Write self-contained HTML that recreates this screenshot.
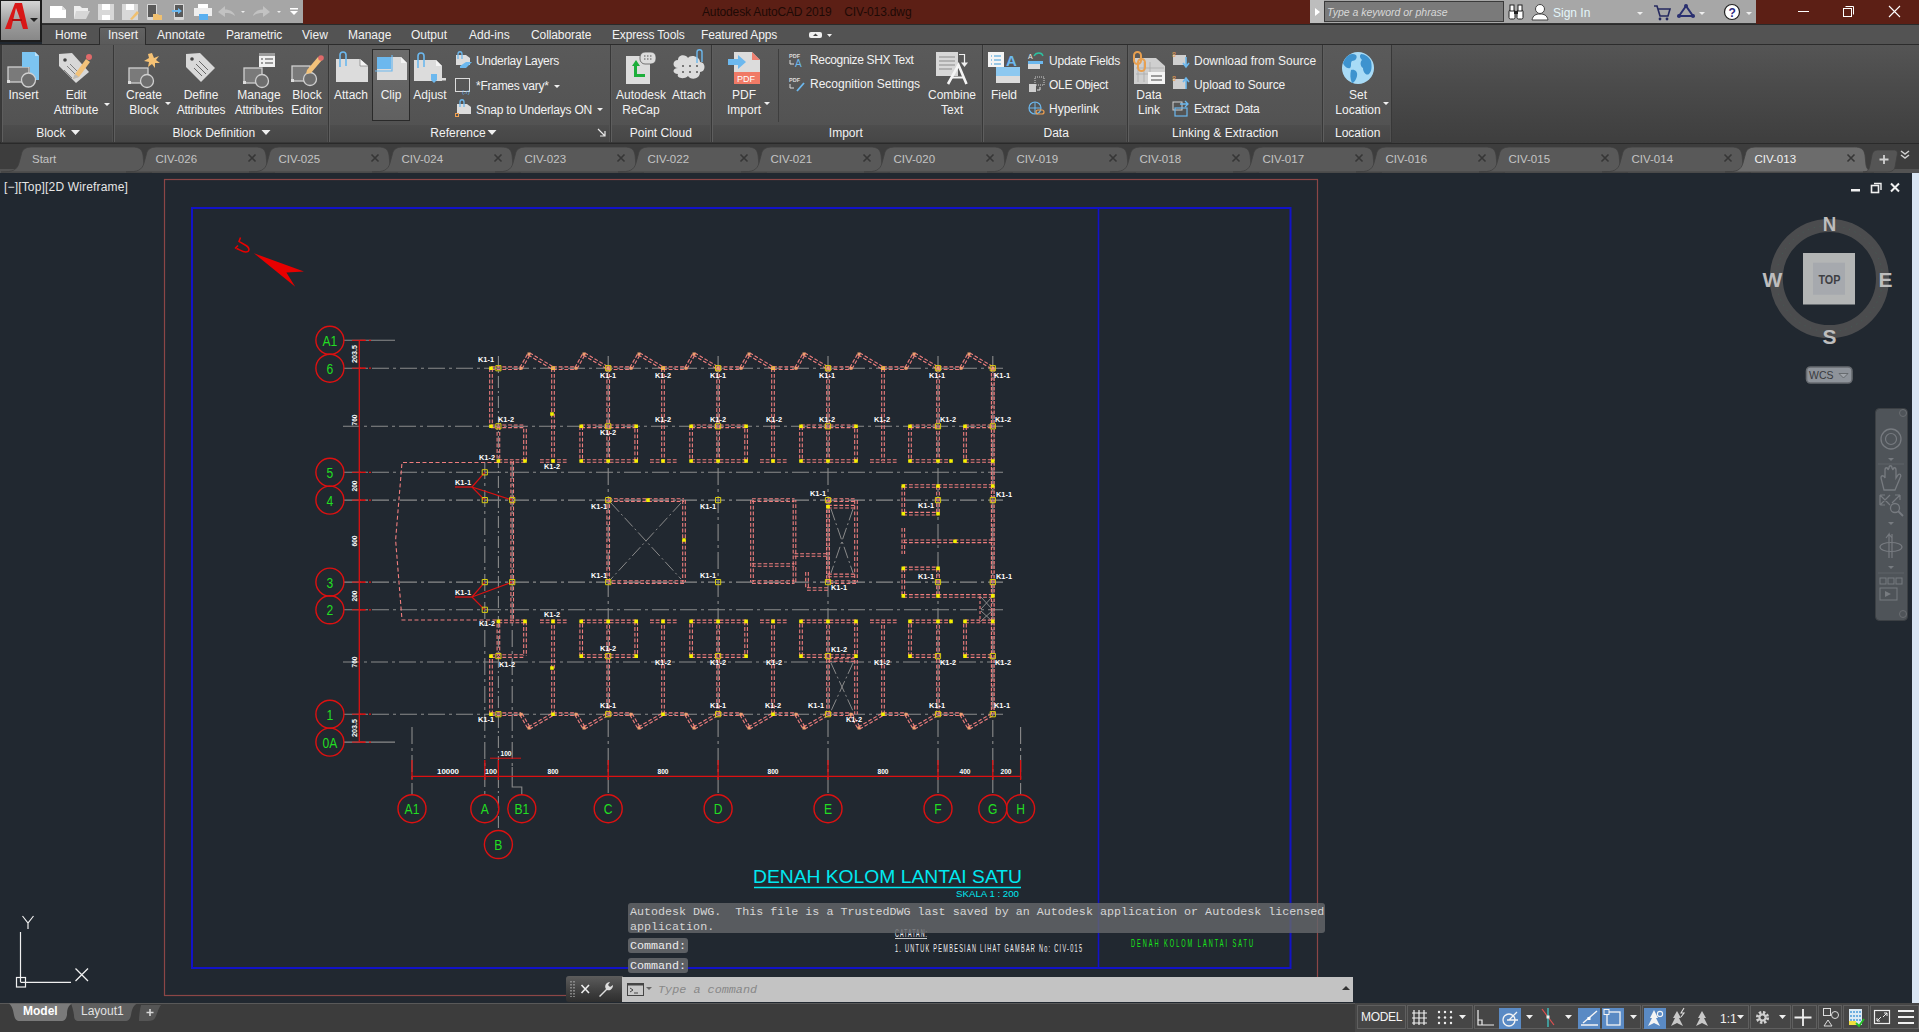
<!DOCTYPE html>
<html><head><meta charset="utf-8">
<style>
*{margin:0;padding:0;box-sizing:border-box}
html,body{width:1919px;height:1032px;overflow:hidden;background:#212830;font-family:"Liberation Sans",sans-serif;font-size:12px;color:#eeeeee}
.a{position:absolute}
svg{position:absolute;overflow:visible}
.t{position:absolute;white-space:nowrap;font-size:12px;color:#f2f2f2;line-height:14px}
.c{text-align:center}
.pt{position:absolute;top:80px;height:17px;left:1px;right:1px;background:linear-gradient(#4d4d4d,#464646);text-align:center;font-size:12px;line-height:16px;color:#f2f2f2;white-space:nowrap}
.pnl{position:absolute;top:45px;height:98px;background:linear-gradient(#5a5a5a,#545454 70%,#505050);border:1px solid #383838;border-top:none;box-shadow:inset 1px 0 0 #5e5e5e}
.ft{position:absolute;top:147px;height:24px;width:121px;background:linear-gradient(#5e5e5e,#545454);border-radius:10px 10px 0 0;color:#c9c9c9;font-size:12px;line-height:23px;padding-left:13px}
.ftx{position:absolute;left:101px;top:0px;color:#a8a8a8;font-size:13px;font-weight:bold}
.sb{position:absolute;top:1005px;height:24px;border:1px solid #5f5f5f;background:#464646}
.mono{font-family:"Liberation Mono",monospace}
</style></head><body>

<div class="a" style="left:0;top:0;width:1919px;height:24px;background:#5c1f15"></div>
<div class="a" style="left:40px;top:0;width:263px;height:24px;background:#a6a6a6;border-bottom:1px solid #333"></div>
<div class="a" style="left:0;top:0;width:42px;height:42px;background:#1c1c1c"></div>
<div class="a" style="left:1px;top:1px;width:39px;height:39px;background:linear-gradient(#d4d4d4,#9a9a9a 60%,#888)"></div>
<svg style="left:0;top:0" width="42" height="42">
 <path d="M5 29 L15 3 L22 3 L28 29 L23 29 L19 16 L16 8 L11 29 Z" fill="#d81818"/>
 <path d="M12 20 L22 20" stroke="#b01010" stroke-width="2"/>
 <path d="M30 18 L38 18 L34 22 Z" fill="#222"/>
</svg>
<svg style="left:40px;top:0" width="263" height="24">
 <path d="M10 6 H22 L26 10 V18 H10 Z" fill="#fff"/><path d="M22 6 V10 H26" fill="#ddd"/>
 <path d="M34 6 H40 L42 8 H48 V11 H40 L34 19 Z" fill="#eee"/><path d="M36 11 H50 L46 19 H34 Z" fill="#d6d6d6"/>
 <path d="M58 4 H74 V20 H58 Z" fill="#d8d8d8"/><rect x="62" y="4" width="8" height="6" fill="#fff"/><rect x="62" y="15" width="8" height="5" fill="#fff"/>
 <path d="M82 4 H98 V20 H82 Z" fill="#d8d8d8"/><rect x="86" y="4" width="8" height="6" fill="#fff"/><path d="M90 19 L97 11 L99 13 L92 20 Z" fill="#f0c070"/>
 <rect x="107" y="4" width="10" height="16" rx="1" fill="#d8d8d8"/><rect x="108" y="5" width="8" height="12" fill="#5a5a5a"/><path d="M113 14 H118 L119 15 H122 V20 H113 Z" fill="#f0c070"/>
 <rect x="134" y="4" width="10" height="16" rx="1" fill="#d8d8d8"/><rect x="135" y="5" width="8" height="12" fill="#5a5a5a"/><path d="M132 10 H138 V8 L142 11 L138 14 V12 H132 Z" fill="#6ab8f0"/>
 <rect x="158" y="4" width="10" height="5" fill="#fff"/><rect x="154" y="8" width="18" height="8" fill="#eee"/><rect x="159" y="14" width="9" height="6" fill="#5ab0f0"/>
 <path d="M178 12 L185 6 V9.5 C190 9.5 194 12 195 16 C192 13.5 189 13 185 13 V17 Z" fill="#c2c2c2"/>
 <path d="M201 11 H205 L203 13 Z" fill="#eee"/>
 <path d="M230 12 L223 6 V9.5 C218 9.5 214 12 213 16 C216 13.5 219 13 223 13 V17 Z" fill="#c2c2c2"/>
 <path d="M237 11 H241 L239 13 Z" fill="#eee"/>
 <rect x="250" y="8" width="8" height="1.5" fill="#fff"/><path d="M250 11 H258 L254 15 Z" fill="#fff"/>
</svg>
<div class="t" style="left:702px;top:5px;font-size:12px;color:#1e0a06;letter-spacing:-0.15px">Autodesk AutoCAD 2019&nbsp;&nbsp;&nbsp;&nbsp;CIV-013.dwg</div>
<div class="a" style="left:1310px;top:0;width:446px;height:24px;background:#a7a7a7;border-bottom:1px solid #333"></div>
<div class="a" style="left:1310px;top:0;width:14px;height:23px;background:#bdbdbd"></div>
<svg style="left:1310px;top:0" width="14" height="24"><path d="M5 8 L10 12 L5 16 Z" fill="#fff"/></svg>
<div class="a" style="left:1324px;top:1px;width:180px;height:21px;background:#7a7a7a;border:1px solid #3a3a3a"></div>
<div class="t" style="left:1327px;top:5px;font-size:10.5px;font-style:italic;color:#d8d8d8">Type a keyword or phrase</div>
<svg style="left:1500px;top:0" width="260" height="24">
 <rect x="9" y="10" width="6" height="9" rx="1.5" fill="#fff" stroke="#222" stroke-width="1"/><rect x="17" y="10" width="6" height="9" rx="1.5" fill="#fff" stroke="#222" stroke-width="1"/><rect x="10" y="5" width="4" height="6" fill="#fff" stroke="#222" stroke-width="1"/><rect x="18" y="5" width="4" height="6" fill="#fff" stroke="#222" stroke-width="1"/><rect x="14" y="11" width="4" height="3" fill="#222"/>
 <circle cx="40" cy="9" r="4.5" fill="#fff" stroke="#444"/><path d="M32 20 C33 15 36 14 40 14 C44 14 47 15 48 20 Z" fill="#fff" stroke="#444"/>
 <text x="53" y="17" font-family="Liberation Sans" font-size="12" fill="#e4f6fa">Sign In</text>
 <path d="M137 12 H143 L140 15 Z" fill="#eee"/>
 <path d="M154 6 L157 6 L160 16 L168 16 L170 9 L158 9" fill="none" stroke="#262a60" stroke-width="1.6"/><circle cx="160" cy="19" r="1.4" fill="#262a60"/><circle cx="167" cy="19" r="1.4" fill="#262a60"/>
 <path d="M186 6 L179 16 L193 16 Z" fill="none" stroke="#2a3070" stroke-width="2"/><circle cx="186" cy="6" r="2" fill="#2a3070"/><circle cx="179" cy="16" r="2" fill="#2a3070"/><circle cx="193" cy="16" r="2" fill="#2a3070"/>
 <path d="M199 12 H205 L202 15 Z" fill="#eee"/>
 <circle cx="232" cy="12" r="7.5" fill="#fff" stroke="#222" stroke-width="1.2"/><text x="228.5" y="16.5" font-family="Liberation Sans" font-weight="bold" font-size="12" fill="#2a2a80">?</text>
 <path d="M246 12 H252 L249 15 Z" fill="#eee"/>
</svg>
<svg style="left:1780px;top:0" width="139" height="24">
 <rect x="18" y="11" width="11" height="1" fill="#fff"/>
 <rect x="63.5" y="8.5" width="8" height="8" fill="none" stroke="#fff"/><path d="M65.5 6.5 H73.5 V14.5" fill="none" stroke="#fff"/>
 <path d="M109 6 L120 17 M120 6 L109 17" stroke="#fff" stroke-width="1.1"/>
</svg>

<div class="a" style="left:42px;top:24px;width:1877px;height:1px;background:#2a2a2a"></div>
<div class="a" style="left:42px;top:25px;width:1877px;height:20px;background:#535353"></div>

<div class="a" style="left:99px;top:27px;width:47px;height:18px;background:linear-gradient(#626262,#5a5a5a);border:1px solid #2b2b2b;border-bottom:none;border-radius:2px 2px 0 0"></div>
<div class="t" style="left:55px;top:28px">Home</div>
<div class="t" style="left:108px;top:28px">Insert</div>
<div class="t" style="left:157px;top:28px">Annotate</div>
<div class="t" style="left:226px;top:28px;letter-spacing:-0.2px">Parametric</div>
<div class="t" style="left:302px;top:28px">View</div>
<div class="t" style="left:348px;top:28px">Manage</div>
<div class="t" style="left:411px;top:28px">Output</div>
<div class="t" style="left:469px;top:28px">Add-ins</div>
<div class="t" style="left:531px;top:28px;letter-spacing:-0.1px">Collaborate</div>
<div class="t" style="left:612px;top:28px;letter-spacing:-0.15px">Express Tools</div>
<div class="t" style="left:701px;top:28px;letter-spacing:-0.15px">Featured Apps</div>
<svg style="left:805px;top:27px" width="30" height="16"><rect x="4" y="5" width="13" height="6" rx="2" fill="#f0f0f0"/><path d="M8 9 L10.5 6.5 L13 9 Z" fill="#444"/><path d="M22 7 H27 L24.5 10 Z" fill="#f0f0f0"/></svg>

<div class="a" style="left:0;top:44px;width:1919px;height:99px;background:linear-gradient(#555 0%,#4a4a4a 45%,#3e3e3e 100%)"></div>
<div class="a" style="left:0;top:44px;width:2px;height:99px;background:#3a3a3a"></div>
<div class="a" style="left:0;top:44px;width:100px;height:1px;background:#2c2c2c"></div>
<div class="a" style="left:145px;top:44px;width:1774px;height:1px;background:#2c2c2c"></div>
<div class="a" style="left:0;top:142px;width:1392px;height:1px;background:#2c2c2c"></div>

<div class="pnl" style="left:1px;width:113px"><div class="pt"></div></div>
<div class="pnl" style="left:113px;width:216px"><div class="pt"></div></div>
<div class="pnl" style="left:328px;width:283px"><div class="pt"></div></div>
<div class="pnl" style="left:610px;width:102px"><div class="pt"></div></div>
<div class="pnl" style="left:711px;width:272px"><div class="pt"></div></div>
<div class="pnl" style="left:982px;width:146px"><div class="pt"></div></div>
<div class="pnl" style="left:1127px;width:196px"><div class="pt"></div></div>
<div class="pnl" style="left:1322px;width:70px"><div class="pt"></div></div>
<div class="a" style="left:372px;top:49px;width:38px;height:72px;background:linear-gradient(#6c6c6c,#606060);border:1px solid #2a2a2a"></div>
<div class="a" style="left:778px;top:49px;width:1px;height:73px;background:#3e3e3e"></div>
<svg style="left:0;top:44px" width="1400" height="100">
<g id="insert">
 <rect x="8" y="23" width="21" height="15" fill="#7a7a7a" stroke="#d0d0d0" stroke-width="1.3"/>
 <rect x="7" y="36" width="3" height="3" fill="#ddd"/>
 <path d="M22 8 H35 L39 12 V36 H30 V23 H22 Z" fill="#7cc4f0"/><path d="M35 8 V12 H39" fill="#bfe2f8"/>
 <circle cx="28.5" cy="36" r="7" fill="#6e6e6e" stroke="#d0d0d0" stroke-width="1.3"/>
</g>
<g id="editattr">
 <path d="M59 10 L72 9 L89 28 L76 39 L59 22 Z" fill="#d8d8d8"/><circle cx="65" cy="16" r="1.8" fill="#444"/>
 <path d="M67 22 L77 32 M70 20 L80 30 M64 26 L72 34" stroke="#777" stroke-width="0.9"/>
 <path d="M75 30 L86 15 L90 18 L79 33 L73 35 Z" fill="#f2c27a"/><path d="M73 35 L75 30 L79 33 Z" fill="#bbb"/><circle cx="89" cy="13" r="3" fill="#e06a6a"/>
</g>
<g id="create">
 <rect x="129" y="24" width="19" height="15" fill="#7a7a7a" stroke="#d0d0d0" stroke-width="1.3"/>
 <rect x="128" y="37" width="3" height="3" fill="#ddd"/>
 <circle cx="147" cy="37" r="6.5" fill="#6e6e6e" stroke="#d0d0d0" stroke-width="1.3"/>
 <path d="M152 9 L154 14 L159 12 L156 16 L160 19 L155 19 L155 24 L152 20 L148 23 L149 18 L144 17 L149 14 L148 10 Z" fill="#f6c275"/>
</g>
<g id="define">
 <path d="M186 10 L200 9 L215 24 L201 38 L186 23 Z" fill="#d8d8d8"/><circle cx="192" cy="15" r="1.8" fill="#444"/>
 <path d="M196 20 L206 30 M194 24 L202 32 M199 17 L208 26" stroke="#666" stroke-width="1"/>
</g>
<g id="manage">
 <rect x="244" y="24" width="18" height="15" fill="#7a7a7a" stroke="#d0d0d0" stroke-width="1.3"/>
 <rect x="243" y="37" width="3" height="3" fill="#ddd"/>
 <circle cx="262" cy="37" r="6.5" fill="#6e6e6e" stroke="#d0d0d0" stroke-width="1.3"/>
 <rect x="259" y="9" width="16" height="14" fill="#f0f0f0"/><rect x="259" y="9" width="16" height="3" fill="#9a9a9a"/>
 <path d="M261 15 H263 M265 15 H273 M261 19 H263 M265 19 H273" stroke="#444" stroke-width="1.2"/>
</g>
<g id="bedit">
 <rect x="292" y="22" width="18" height="15" fill="#7a7a7a" stroke="#d0d0d0" stroke-width="1.3"/>
 <rect x="291" y="35" width="3" height="3" fill="#ddd"/>
 <circle cx="310" cy="35" r="6.5" fill="#6e6e6e" stroke="#d0d0d0" stroke-width="1.3"/>
 <path d="M307 26 L318 13 L322 16 L311 29 L306 30 Z" fill="#f2c27a"/><circle cx="321" cy="14" r="2.8" fill="#e06a6a"/>
</g>
<g id="attach">
 <path d="M336 15 H360 L368 22 V38 H336 Z" fill="#dcdcdc"/><path d="M360 15 V22 H368" fill="#f4f4f4" stroke="#555" stroke-width="0.5"/>
 <path d="M340 23 V11 C340 7 346 7 346 11 V22" fill="none" stroke="#6cb8ee" stroke-width="1.6"/>
</g>
<g id="clip">
 <path d="M377 13 H401 L407 19 V36 H377 Z" fill="#dcdcdc"/><path d="M401 13 V19 H407" fill="#f4f4f4"/>
 <rect x="377" y="13" width="14" height="12" fill="#6cb8ee"/><path d="M375 27 H392 V11" fill="none" stroke="#6cb8ee" stroke-width="1.2"/>
</g>
<g id="adjust">
 <path d="M414 16 H436 L442 22 V37 H414 Z" fill="#dcdcdc"/><path d="M436 16 V22 H442" fill="#f4f4f4"/>
 <path d="M418 24 V12 C418 8 424 8 424 12 V23" fill="none" stroke="#6cb8ee" stroke-width="1.6"/>
 <rect x="429" y="34" width="17" height="2.5" fill="#dcdcdc"/><path d="M431 30 H437 V36 L434 39 L431 36 Z" fill="#6cb8ee"/>
</g>
<g id="smallref">
 <path d="M456 11 H466 L470 14 V21 H456 Z" fill="#dcdcdc"/><path d="M458 15 V10 C458 7 462 7 462 10 V15" fill="none" stroke="#6cb8ee" stroke-width="1.3"/><path d="M460 22 L466 18 H472 L466 24 H460 Z" fill="#6cb8ee"/>
 <rect x="455.5" y="34.5" width="14" height="13" fill="none" stroke="#dcdcdc"/><text x="462" y="50" font-size="6" fill="#6cb8ee" font-family="Liberation Sans">(.r)</text>
 <path d="M457 60 H467 L471 63 V70 H457 Z" fill="#dcdcdc"/><path d="M460 63 V58 C460 55 464 55 464 58 V63" fill="none" stroke="#6cb8ee" stroke-width="1.3"/><rect x="455.5" y="69.5" width="3" height="3" fill="none" stroke="#f0a050"/>
</g>
<g id="recap">
 <rect x="626" y="12" width="24" height="28" fill="#dcdcdc"/><path d="M636 16 L640 22 H637 V30 H645 V33 H634 V22 H632 Z" fill="#1cae3a"/>
 <rect x="640" y="8" width="16" height="12" rx="5" fill="#dcdcdc" stroke="#555" stroke-width="0.8"/><path d="M644 12 H652 M644 15 H652" stroke="#555" stroke-width="1.2" stroke-dasharray="1.5 1.5"/>
</g>
<g id="pcattach">
 <path d="M678 24 C672 24 672 16 678 16 C678 10 686 10 688 14 C690 10 700 12 700 18 C706 18 706 28 700 28 C700 36 690 36 688 32 C684 36 676 34 678 30 C672 30 672 24 678 24 Z" fill="#dcdcdc"/>
 <path d="M682 22 H684 M689 22 H691 M696 22 H698 M682 28 H684 M689 28 H691 M696 28 H698" stroke="#555" stroke-width="1.6"/>
 <path d="M697 19 V8 C697 5 702 5 702 8 V18" fill="none" stroke="#6cb8ee" stroke-width="1.4"/>
</g>
<g id="pdf">
 <path d="M734 8 H752 L760 16 V40 H734 Z" fill="#dcdcdc"/><path d="M752 8 L760 16 H752 Z" fill="#f08070"/>
 <rect x="734" y="28" width="26" height="12" fill="#f07a66"/><text x="737" y="38" font-size="9" fill="#fff" font-family="Liberation Sans">PDF</text>
 <path d="M728 15 H738 V11 L746 18 L738 25 V21 H728 Z" fill="#6cb8ee"/>
</g>
<g id="shx">
 <text x="789" y="14" font-size="5.5" fill="#ddd" font-family="Liberation Sans" font-weight="bold">PDF</text><path d="M790 16 V20 H794" fill="none" stroke="#ddd" stroke-width="1"/><text x="795" y="23" font-size="10" fill="#6cb8ee" font-family="Liberation Sans">A</text>
 <text x="789" y="38" font-size="5.5" fill="#ddd" font-family="Liberation Sans" font-weight="bold">PDF</text><path d="M790 40 V44 H794" fill="none" stroke="#ddd" stroke-width="1"/><path d="M797 47 L804 39" stroke="#6cb8ee" stroke-width="1.8"/>
</g>
<g id="combine">
 <rect x="936" y="8" width="22" height="24" fill="#d8d8d8"/><path d="M939 13 H955 M939 17 H955 M939 21 H955 M939 25 H952" stroke="#8a8a8a" stroke-width="1.1"/>
 <path d="M959 10.5 H964.5 V20" fill="none" stroke="#f0f0f0" stroke-width="1.2"/><path d="M961 18.5 H968 L964.5 23 Z" fill="#f0f0f0"/>
 <path d="M948 40 L958.5 21 L966.5 40" fill="none" stroke="#f4f4f4" stroke-width="2.6"/><path d="M951.5 33.5 H963.5" stroke="#f4f4f4" stroke-width="2"/>
</g>
<g id="field">
 <rect x="988" y="8" width="16" height="15" fill="#f4f4f4"/><path d="M991 12 H992 M994 12 H1001 M991 16 H992 M994 16 H1001 M991 20 H992 M994 20 H1001" stroke="#3a9ad8" stroke-width="1.2"/>
 <text x="1006" y="22" font-size="15" fill="#6cb8ee" font-family="Liberation Sans" font-weight="bold">A</text>
 <rect x="996" y="23" width="24" height="9" fill="#8cc8f0"/><rect x="996" y="32" width="24" height="7" fill="#dcdcdc"/>
</g>
<g id="datasmall">
 <text x="1028" y="15" font-size="7" fill="#eee" font-family="Liberation Sans">A</text><path d="M1034 12 C1036 8 1042 8 1043 12" fill="none" stroke="#2cc2a0" stroke-width="1.3"/><rect x="1028" y="17" width="15" height="3" fill="#6cb8ee"/><rect x="1028" y="20" width="12" height="5" fill="#dcdcdc"/>
 <rect x="1029" y="40" width="7" height="8" fill="#cfcfcf"/><rect x="1035" y="33" width="9" height="8" fill="none" stroke="#cfcfcf" stroke-dasharray="1 1"/><path d="M1040 43 V46 H1037" fill="none" stroke="#ddd"/>
 <circle cx="1035" cy="64" r="6" fill="none" stroke="#6cb8ee" stroke-width="1.2"/><path d="M1029 64 H1041 M1035 58 V70" stroke="#6cb8ee"/><rect x="1036" y="66" width="8" height="4" rx="2" fill="none" stroke="#f0a050" stroke-width="1.2"/>
</g>
<g id="datalink">
 <path d="M1134 14 H1156 L1165 22 V40 H1134 Z" fill="#cfcfcf"/><path d="M1138 18 V38 M1144 18 V38 M1150 18 V38 M1136 24 H1164 M1136 30 H1164" stroke="#aaa" stroke-width="0.8"/>
 <rect x="1148" y="28" width="17" height="12" fill="#f4f4f4"/><path d="M1151 32 H1162 M1151 36 H1162" stroke="#444"/>
 <rect x="1134" y="8" width="7" height="12" rx="3.5" fill="none" stroke="#e8a050" stroke-width="2"/><rect x="1138" y="15" width="7" height="12" rx="3.5" fill="none" stroke="#e8a050" stroke-width="2"/>
</g>
<g id="linksmall">
 <rect x="1173" y="11" width="13" height="10" fill="#cfcfcf"/><text x="1172" y="13" font-size="7" fill="#e8a050" font-family="Liberation Sans">8</text><path d="M1186 13 V22 M1183 19 L1186 23 L1189 19" fill="none" stroke="#6cb8ee" stroke-width="1.6"/>
 <rect x="1173" y="35" width="13" height="10" fill="#cfcfcf"/><text x="1172" y="37" font-size="7" fill="#e8a050" font-family="Liberation Sans">8</text><path d="M1186 45 V35 M1183 38 L1186 34 L1189 38" fill="none" stroke="#6cb8ee" stroke-width="1.6"/>
 <rect x="1173" y="58" width="9" height="8" fill="none" stroke="#cfcfcf"/><rect x="1175" y="64" width="12" height="8" fill="none" stroke="#6cb8ee" stroke-width="1.2"/><path d="M1180 60 H1188 M1185 57 L1188 60 L1185 63" fill="none" stroke="#6cb8ee" stroke-width="1.3"/>
</g>
<g id="globe">
 <circle cx="1358" cy="24" r="16" fill="#a8dbf6"/>
 <path d="M1345 15 C1348 10 1353 9 1356 11 C1358 14 1355 17 1352 17 C1350 19 1352 22 1350 24 C1347 25 1344 22 1343 19 Z M1351 26 C1355 25 1358 28 1357 32 C1356 36 1354 39 1352 39 C1350 35 1350 30 1351 26 Z M1361 10 C1365 10 1369 13 1371 17 C1372 22 1372 27 1369 30 C1366 32 1363 28 1363 24 C1360 22 1360 18 1362 16 C1360 14 1359 12 1361 10 Z" fill="#3d93cf"/>
</g>
<path d="M104 59 H110 L107 62 Z M165 58 H171 L168 61 Z M764 58 H770 L767 61 Z M1383 58 H1389 L1386 61 Z" fill="#f0f0f0"/>
<path d="M554 41 H560 L557 44 Z M597 64 H603 L600 67 Z" fill="#f0f0f0"/>
</svg>
<div class="t c" style="left:3px;top:88px;width:41px">Insert</div>
<div class="t c" style="left:46px;top:88px;width:60px">Edit</div>
<div class="t c" style="left:46px;top:103px;width:60px">Attribute</div>
<div class="t c" style="left:120px;top:88px;width:48px">Create</div>
<div class="t c" style="left:120px;top:103px;width:48px">Block</div>
<div class="t c" style="left:172px;top:88px;width:58px">Define</div>
<div class="t c" style="left:172px;top:103px;width:58px;letter-spacing:-0.2px">Attributes</div>
<div class="t c" style="left:230px;top:88px;width:58px">Manage</div>
<div class="t c" style="left:230px;top:103px;width:58px;letter-spacing:-0.2px">Attributes</div>
<div class="t c" style="left:286px;top:88px;width:42px">Block</div>
<div class="t c" style="left:286px;top:103px;width:42px">Editor</div>
<div class="t c" style="left:330px;top:88px;width:42px">Attach</div>
<div class="t c" style="left:372px;top:88px;width:38px">Clip</div>
<div class="t c" style="left:410px;top:88px;width:40px">Adjust</div>
<div class="t" style="left:476px;top:53.5px;letter-spacing:-0.3px">Underlay Layers</div>
<div class="t" style="left:476px;top:78.5px;letter-spacing:-0.26px">*Frames vary*</div>
<div class="t" style="left:476px;top:103px;letter-spacing:-0.2px">Snap to Underlays ON</div>
<div class="t c" style="left:614px;top:88px;width:54px">Autodesk</div>
<div class="t c" style="left:614px;top:103px;width:54px">ReCap</div>
<div class="t c" style="left:668px;top:88px;width:42px">Attach</div>
<div class="t c" style="left:720px;top:88px;width:48px">PDF</div>
<div class="t c" style="left:720px;top:103px;width:48px">Import</div>
<div class="t" style="left:810px;top:53px;letter-spacing:-0.35px">Recognize SHX Text</div>
<div class="t" style="left:810px;top:77px">Recognition Settings</div>
<div class="t c" style="left:922px;top:88px;width:60px">Combine</div>
<div class="t c" style="left:922px;top:103px;width:60px">Text</div>
<div class="t c" style="left:984px;top:88px;width:40px">Field</div>
<div class="t" style="left:1049px;top:54px;letter-spacing:-0.23px">Update Fields</div>
<div class="t" style="left:1049px;top:78px;letter-spacing:-0.3px">OLE Object</div>
<div class="t" style="left:1049px;top:102px">Hyperlink</div>
<div class="t c" style="left:1128px;top:88px;width:42px">Data</div>
<div class="t c" style="left:1128px;top:103px;width:42px">Link</div>
<div class="t" style="left:1194px;top:54px">Download from Source</div>
<div class="t" style="left:1194px;top:78px;letter-spacing:-0.1px">Upload to Source</div>
<div class="t" style="left:1194px;top:102px;letter-spacing:-0.3px">Extract&nbsp; Data</div>
<div class="t c" style="left:1326px;top:88px;width:64px">Set</div>
<div class="t c" style="left:1326px;top:103px;width:64px">Location</div>
<div class="t" style="left:36.2px;top:125.5px">Block</div>
<div class="t" style="left:172.5px;top:125.5px">Block Definition</div>
<div class="t" style="left:430.3px;top:125.5px">Reference</div>
<div class="t" style="left:629.8px;top:125.5px">Point Cloud</div>
<div class="t" style="left:828.8px;top:125.5px">Import</div>
<div class="t" style="left:1043.5px;top:125.5px">Data</div>
<div class="t" style="left:1172px;top:125.5px">Linking &amp; Extraction</div>
<div class="t" style="left:1335px;top:125.5px">Location</div>
<svg style="left:0;top:120px" width="620" height="20"><path d="M71 10 H80 L75.5 15 Z M261.5 10 H270.5 L266 15 Z M487.5 10 H496.5 L492 15 Z" fill="#f0f0f0"/><path d="M598 9 L605 16 M605 11 V16 H600" fill="none" stroke="#e8e8e8" stroke-width="1.2"/></svg>

<div class="a" style="left:0;top:143px;width:1919px;height:30px;background:#3d3d3d"></div>
<div class="a" style="left:0;top:143px;width:1919px;height:1px;background:#2a2a2a"></div>
<svg style="left:0;top:143px" width="1919" height="30">
<rect x="0" y="26" width="1919" height="4" fill="#535353"/>
<path d="M1,29 C13,29 17,27 19,20 L22,9 C24,5 27,4 33,4 L132,4 C139,4 142,6 143,12 L144,22 C145,27 148,29 152,29 Z" fill="#595959" stroke="#404040" stroke-width="0.8"/>
<path d="M126,29 C138,29 142,27 144,20 L147,9 C149,5 152,4 158,4 L255,4 C262,4 265,6 266,12 L267,22 C268,27 271,29 275,29 Z" fill="#595959" stroke="#404040" stroke-width="0.8"/>
<path d="M248.5,11.5 L255.5,18.5 M255.5,11.5 L248.5,18.5" stroke="#363636" stroke-width="1.6"/>
<path d="M249,29 C261,29 265,27 267,20 L270,9 C272,5 275,4 281,4 L378,4 C385,4 388,6 389,12 L390,22 C391,27 394,29 398,29 Z" fill="#595959" stroke="#404040" stroke-width="0.8"/>
<path d="M371.5,11.5 L378.5,18.5 M378.5,11.5 L371.5,18.5" stroke="#363636" stroke-width="1.6"/>
<path d="M372,29 C384,29 388,27 390,20 L393,9 C395,5 398,4 404,4 L501,4 C508,4 511,6 512,12 L513,22 C514,27 517,29 521,29 Z" fill="#595959" stroke="#404040" stroke-width="0.8"/>
<path d="M494.5,11.5 L501.5,18.5 M501.5,11.5 L494.5,18.5" stroke="#363636" stroke-width="1.6"/>
<path d="M495,29 C507,29 511,27 513,20 L516,9 C518,5 521,4 527,4 L624,4 C631,4 634,6 635,12 L636,22 C637,27 640,29 644,29 Z" fill="#595959" stroke="#404040" stroke-width="0.8"/>
<path d="M617.5,11.5 L624.5,18.5 M624.5,11.5 L617.5,18.5" stroke="#363636" stroke-width="1.6"/>
<path d="M618,29 C630,29 634,27 636,20 L639,9 C641,5 644,4 650,4 L747,4 C754,4 757,6 758,12 L759,22 C760,27 763,29 767,29 Z" fill="#595959" stroke="#404040" stroke-width="0.8"/>
<path d="M740.5,11.5 L747.5,18.5 M747.5,11.5 L740.5,18.5" stroke="#363636" stroke-width="1.6"/>
<path d="M741,29 C753,29 757,27 759,20 L762,9 C764,5 767,4 773,4 L870,4 C877,4 880,6 881,12 L882,22 C883,27 886,29 890,29 Z" fill="#595959" stroke="#404040" stroke-width="0.8"/>
<path d="M863.5,11.5 L870.5,18.5 M870.5,11.5 L863.5,18.5" stroke="#363636" stroke-width="1.6"/>
<path d="M864,29 C876,29 880,27 882,20 L885,9 C887,5 890,4 896,4 L993,4 C1000,4 1003,6 1004,12 L1005,22 C1006,27 1009,29 1013,29 Z" fill="#595959" stroke="#404040" stroke-width="0.8"/>
<path d="M986.5,11.5 L993.5,18.5 M993.5,11.5 L986.5,18.5" stroke="#363636" stroke-width="1.6"/>
<path d="M987,29 C999,29 1003,27 1005,20 L1008,9 C1010,5 1013,4 1019,4 L1116,4 C1123,4 1126,6 1127,12 L1128,22 C1129,27 1132,29 1136,29 Z" fill="#595959" stroke="#404040" stroke-width="0.8"/>
<path d="M1109.5,11.5 L1116.5,18.5 M1116.5,11.5 L1109.5,18.5" stroke="#363636" stroke-width="1.6"/>
<path d="M1110,29 C1122,29 1126,27 1128,20 L1131,9 C1133,5 1136,4 1142,4 L1239,4 C1246,4 1249,6 1250,12 L1251,22 C1252,27 1255,29 1259,29 Z" fill="#595959" stroke="#404040" stroke-width="0.8"/>
<path d="M1232.5,11.5 L1239.5,18.5 M1239.5,11.5 L1232.5,18.5" stroke="#363636" stroke-width="1.6"/>
<path d="M1233,29 C1245,29 1249,27 1251,20 L1254,9 C1256,5 1259,4 1265,4 L1362,4 C1369,4 1372,6 1373,12 L1374,22 C1375,27 1378,29 1382,29 Z" fill="#595959" stroke="#404040" stroke-width="0.8"/>
<path d="M1355.5,11.5 L1362.5,18.5 M1362.5,11.5 L1355.5,18.5" stroke="#363636" stroke-width="1.6"/>
<path d="M1356,29 C1368,29 1372,27 1374,20 L1377,9 C1379,5 1382,4 1388,4 L1485,4 C1492,4 1495,6 1496,12 L1497,22 C1498,27 1501,29 1505,29 Z" fill="#595959" stroke="#404040" stroke-width="0.8"/>
<path d="M1478.5,11.5 L1485.5,18.5 M1485.5,11.5 L1478.5,18.5" stroke="#363636" stroke-width="1.6"/>
<path d="M1479,29 C1491,29 1495,27 1497,20 L1500,9 C1502,5 1505,4 1511,4 L1608,4 C1615,4 1618,6 1619,12 L1620,22 C1621,27 1624,29 1628,29 Z" fill="#595959" stroke="#404040" stroke-width="0.8"/>
<path d="M1601.5,11.5 L1608.5,18.5 M1608.5,11.5 L1601.5,18.5" stroke="#363636" stroke-width="1.6"/>
<path d="M1602,29 C1614,29 1618,27 1620,20 L1623,9 C1625,5 1628,4 1634,4 L1731,4 C1738,4 1741,6 1742,12 L1743,22 C1744,27 1747,29 1751,29 Z" fill="#595959" stroke="#404040" stroke-width="0.8"/>
<path d="M1724.5,11.5 L1731.5,18.5 M1731.5,11.5 L1724.5,18.5" stroke="#363636" stroke-width="1.6"/>
<path d="M1725,29 C1737,29 1741,27 1743,20 L1746,9 C1748,5 1751,4 1757,4 L1854,4 C1861,4 1864,6 1865,12 L1866,22 C1867,27 1870,29 1874,29 Z" fill="#6c6c6c" stroke="#404040" stroke-width="0.8"/>
<path d="M1847.5,11.5 L1854.5,18.5 M1854.5,11.5 L1847.5,18.5" stroke="#363636" stroke-width="1.6"/>
<path d="M1863,29 C1868,29 1869,27 1870,22 L1872,12 C1873,8 1875,7 1879,7 L1894,7 C1897,7 1898,9 1897,13 L1895,24 C1894,28 1891,29 1886,29 Z" fill="#555" stroke="#404040" stroke-width="0.8"/>
<path d="M1884,12 V21 M1879.5,16.5 H1888.5" stroke="#d0d0d0" stroke-width="1.8"/>
<path d="M1901,8 L1905,11 L1909,8 M1901,12 L1905,15 L1909,12" fill="none" stroke="#d0d0d0" stroke-width="1.5"/>
</svg>
<div class="t" style="left:32px;top:151.5px;font-size:11.5px;color:#c4c4c4">Start</div>
<div class="t" style="left:155.5px;top:151.5px;font-size:11.5px;color:#c4c4c4">CIV-026</div>
<div class="t" style="left:278.5px;top:151.5px;font-size:11.5px;color:#c4c4c4">CIV-025</div>
<div class="t" style="left:401.5px;top:151.5px;font-size:11.5px;color:#c4c4c4">CIV-024</div>
<div class="t" style="left:524.5px;top:151.5px;font-size:11.5px;color:#c4c4c4">CIV-023</div>
<div class="t" style="left:647.5px;top:151.5px;font-size:11.5px;color:#c4c4c4">CIV-022</div>
<div class="t" style="left:770.5px;top:151.5px;font-size:11.5px;color:#c4c4c4">CIV-021</div>
<div class="t" style="left:893.5px;top:151.5px;font-size:11.5px;color:#c4c4c4">CIV-020</div>
<div class="t" style="left:1016.5px;top:151.5px;font-size:11.5px;color:#c4c4c4">CIV-019</div>
<div class="t" style="left:1139.5px;top:151.5px;font-size:11.5px;color:#c4c4c4">CIV-018</div>
<div class="t" style="left:1262.5px;top:151.5px;font-size:11.5px;color:#c4c4c4">CIV-017</div>
<div class="t" style="left:1385.5px;top:151.5px;font-size:11.5px;color:#c4c4c4">CIV-016</div>
<div class="t" style="left:1508.5px;top:151.5px;font-size:11.5px;color:#c4c4c4">CIV-015</div>
<div class="t" style="left:1631.5px;top:151.5px;font-size:11.5px;color:#c4c4c4">CIV-014</div>
<div class="t" style="left:1754.5px;top:151.5px;font-size:11.5px;color:#f2f2f2">CIV-013</div>
<div class="a" style="left:0;top:173px;width:1912px;height:830px;background:#212830"></div>
<div class="a" style="left:1912px;top:173px;width:7px;height:830px;background:#d9e5f3"></div>

<svg style="left:0;top:0" width="1919" height="1032" viewBox="0 0 1919 1032"><rect x="164.5" y="179.5" width="1153" height="816" fill="none" stroke="#8c4646" stroke-width="1.2"/>
<rect x="192" y="208" width="1098.5" height="760" fill="none" stroke="#1212c8" stroke-width="2"/>
<line x1="1098.5" y1="208" x2="1098.5" y2="968" stroke="#1212c8" stroke-width="1.6"/>
<path d="M254,253.3 L304,271.6 L286.4,272.5 L295.2,286.7 Z" fill="#e80000"/>
<path d="M240.5,237.5 L239,241.5 L246,245.5 C250,248 250,252 245.5,252 C243,252 240,250 236.5,248.5 M238,245.5 L235,248.5" fill="none" stroke="#e80000" stroke-width="1.5"/>
<line x1="344" y1="340.3" x2="395" y2="340.3" stroke="#8a8a8a" stroke-width="1.1" stroke-dasharray="50 0" stroke-dashoffset="0"/>
<line x1="344" y1="368.2" x2="1003" y2="368.2" stroke="#8a8a8a" stroke-width="1.1" stroke-dasharray="17 4 3 4" stroke-dashoffset="0"/>
<line x1="344" y1="472.3" x2="1003" y2="472.3" stroke="#8a8a8a" stroke-width="1.1" stroke-dasharray="17 4 3 4" stroke-dashoffset="0"/>
<line x1="344" y1="500.1" x2="1003" y2="500.1" stroke="#8a8a8a" stroke-width="1.1" stroke-dasharray="17 4 3 4" stroke-dashoffset="0"/>
<line x1="344" y1="582.1" x2="1003" y2="582.1" stroke="#8a8a8a" stroke-width="1.1" stroke-dasharray="17 4 3 4" stroke-dashoffset="0"/>
<line x1="344" y1="609.8" x2="1003" y2="609.8" stroke="#8a8a8a" stroke-width="1.1" stroke-dasharray="17 4 3 4" stroke-dashoffset="0"/>
<line x1="344" y1="714.2" x2="1003" y2="714.2" stroke="#8a8a8a" stroke-width="1.1" stroke-dasharray="17 4 3 4" stroke-dashoffset="0"/>
<line x1="344" y1="742.1" x2="395" y2="742.1" stroke="#8a8a8a" stroke-width="1.1" stroke-dasharray="50 0" stroke-dashoffset="0"/>
<line x1="343" y1="426.3" x2="1003" y2="426.3" stroke="#8a8a8a" stroke-width="1.1" stroke-dasharray="17 4 3 4" stroke-dashoffset="0"/>
<line x1="343" y1="662" x2="1003" y2="662" stroke="#8a8a8a" stroke-width="1.1" stroke-dasharray="17 4 3 4" stroke-dashoffset="0"/>
<line x1="412" y1="727" x2="412" y2="795" stroke="#8a8a8a" stroke-width="1.1" stroke-dasharray="17 4 3 4" stroke-dashoffset="0"/>
<line x1="484.8" y1="462" x2="484.8" y2="795" stroke="#8a8a8a" stroke-width="1.1" stroke-dasharray="17 4 3 4" stroke-dashoffset="0"/>
<line x1="498.4" y1="356" x2="498.4" y2="830" stroke="#8a8a8a" stroke-width="1.1" stroke-dasharray="12 3 2 3" stroke-dashoffset="0"/>
<line x1="608.2" y1="356" x2="608.2" y2="795" stroke="#8a8a8a" stroke-width="1.1" stroke-dasharray="17 4 3 4" stroke-dashoffset="0"/>
<line x1="718.1" y1="356" x2="718.1" y2="795" stroke="#8a8a8a" stroke-width="1.1" stroke-dasharray="17 4 3 4" stroke-dashoffset="0"/>
<line x1="828" y1="356" x2="828" y2="795" stroke="#8a8a8a" stroke-width="1.1" stroke-dasharray="17 4 3 4" stroke-dashoffset="0"/>
<line x1="938" y1="356" x2="938" y2="795" stroke="#8a8a8a" stroke-width="1.1" stroke-dasharray="17 4 3 4" stroke-dashoffset="0"/>
<line x1="992.8" y1="356" x2="992.8" y2="795" stroke="#8a8a8a" stroke-width="1.1" stroke-dasharray="17 4 3 4" stroke-dashoffset="0"/>
<line x1="1020.6" y1="727" x2="1020.6" y2="795" stroke="#8a8a8a" stroke-width="1.1" stroke-dasharray="17 4 3 4" stroke-dashoffset="0"/>
<path d="M512.2,462 L512.2,767" fill="none" stroke="#8a8a8a" stroke-width="1.1" stroke-dasharray="17 4 3 4"/>
<path d="M512.2,767 L512.2,787 L521.8,787 L521.8,795" fill="none" stroke="#8a8a8a" stroke-width="1.1"/>
<circle cx="329.9" cy="340.3" r="14" fill="none" stroke="#dd1111" stroke-width="1.4"/>
<text x="329.9" y="345.8" text-anchor="middle" font-family="Liberation Sans" font-size="15.5" fill="#22dd22" transform="translate(329.9,0) scale(0.78,1) translate(-329.9,0)">A1</text>
<circle cx="329.9" cy="368.2" r="14" fill="none" stroke="#dd1111" stroke-width="1.4"/>
<text x="329.9" y="373.7" text-anchor="middle" font-family="Liberation Sans" font-size="15.5" fill="#22dd22" transform="translate(329.9,0) scale(0.78,1) translate(-329.9,0)">6</text>
<circle cx="329.9" cy="472.3" r="14" fill="none" stroke="#dd1111" stroke-width="1.4"/>
<text x="329.9" y="477.8" text-anchor="middle" font-family="Liberation Sans" font-size="15.5" fill="#22dd22" transform="translate(329.9,0) scale(0.78,1) translate(-329.9,0)">5</text>
<circle cx="329.9" cy="500.1" r="14" fill="none" stroke="#dd1111" stroke-width="1.4"/>
<text x="329.9" y="505.6" text-anchor="middle" font-family="Liberation Sans" font-size="15.5" fill="#22dd22" transform="translate(329.9,0) scale(0.78,1) translate(-329.9,0)">4</text>
<circle cx="329.9" cy="582.1" r="14" fill="none" stroke="#dd1111" stroke-width="1.4"/>
<text x="329.9" y="587.6" text-anchor="middle" font-family="Liberation Sans" font-size="15.5" fill="#22dd22" transform="translate(329.9,0) scale(0.78,1) translate(-329.9,0)">3</text>
<circle cx="329.9" cy="609.8" r="14" fill="none" stroke="#dd1111" stroke-width="1.4"/>
<text x="329.9" y="615.3" text-anchor="middle" font-family="Liberation Sans" font-size="15.5" fill="#22dd22" transform="translate(329.9,0) scale(0.78,1) translate(-329.9,0)">2</text>
<circle cx="329.9" cy="714.2" r="14" fill="none" stroke="#dd1111" stroke-width="1.4"/>
<text x="329.9" y="719.7" text-anchor="middle" font-family="Liberation Sans" font-size="15.5" fill="#22dd22" transform="translate(329.9,0) scale(0.78,1) translate(-329.9,0)">1</text>
<circle cx="329.9" cy="742.1" r="14" fill="none" stroke="#dd1111" stroke-width="1.4"/>
<text x="329.9" y="747.6" text-anchor="middle" font-family="Liberation Sans" font-size="15.5" fill="#22dd22" transform="translate(329.9,0) scale(0.78,1) translate(-329.9,0)">0A</text>
<circle cx="412" cy="808.7" r="14" fill="none" stroke="#dd1111" stroke-width="1.4"/>
<text x="412" y="814.2" text-anchor="middle" font-family="Liberation Sans" font-size="15.5" fill="#22dd22" transform="translate(412,0) scale(0.78,1) translate(-412,0)">A1</text>
<circle cx="484.8" cy="808.7" r="14" fill="none" stroke="#dd1111" stroke-width="1.4"/>
<text x="484.8" y="814.2" text-anchor="middle" font-family="Liberation Sans" font-size="15.5" fill="#22dd22" transform="translate(484.8,0) scale(0.78,1) translate(-484.8,0)">A</text>
<circle cx="498.4" cy="844.5" r="14" fill="none" stroke="#dd1111" stroke-width="1.4"/>
<text x="498.4" y="850.0" text-anchor="middle" font-family="Liberation Sans" font-size="15.5" fill="#22dd22" transform="translate(498.4,0) scale(0.78,1) translate(-498.4,0)">B</text>
<circle cx="608.2" cy="808.7" r="14" fill="none" stroke="#dd1111" stroke-width="1.4"/>
<text x="608.2" y="814.2" text-anchor="middle" font-family="Liberation Sans" font-size="15.5" fill="#22dd22" transform="translate(608.2,0) scale(0.78,1) translate(-608.2,0)">C</text>
<circle cx="718.1" cy="808.7" r="14" fill="none" stroke="#dd1111" stroke-width="1.4"/>
<text x="718.1" y="814.2" text-anchor="middle" font-family="Liberation Sans" font-size="15.5" fill="#22dd22" transform="translate(718.1,0) scale(0.78,1) translate(-718.1,0)">D</text>
<circle cx="828" cy="808.7" r="14" fill="none" stroke="#dd1111" stroke-width="1.4"/>
<text x="828" y="814.2" text-anchor="middle" font-family="Liberation Sans" font-size="15.5" fill="#22dd22" transform="translate(828,0) scale(0.78,1) translate(-828,0)">E</text>
<circle cx="938" cy="808.7" r="14" fill="none" stroke="#dd1111" stroke-width="1.4"/>
<text x="938" y="814.2" text-anchor="middle" font-family="Liberation Sans" font-size="15.5" fill="#22dd22" transform="translate(938,0) scale(0.78,1) translate(-938,0)">F</text>
<circle cx="992.8" cy="808.7" r="14" fill="none" stroke="#dd1111" stroke-width="1.4"/>
<text x="992.8" y="814.2" text-anchor="middle" font-family="Liberation Sans" font-size="15.5" fill="#22dd22" transform="translate(992.8,0) scale(0.78,1) translate(-992.8,0)">G</text>
<circle cx="1020.6" cy="808.7" r="14" fill="none" stroke="#dd1111" stroke-width="1.4"/>
<text x="1020.6" y="814.2" text-anchor="middle" font-family="Liberation Sans" font-size="15.5" fill="#22dd22" transform="translate(1020.6,0) scale(0.78,1) translate(-1020.6,0)">H</text>
<circle cx="521.8" cy="808.7" r="14" fill="none" stroke="#dd1111" stroke-width="1.4"/>
<text x="521.8" y="814.2" text-anchor="middle" font-family="Liberation Sans" font-size="15.5" fill="#22dd22" transform="translate(521.8,0) scale(0.78,1) translate(-521.8,0)">B1</text>
<line x1="359.3" y1="340" x2="359.3" y2="742" stroke="#dd1111" stroke-width="1.3"/>
<line x1="352" y1="340.3" x2="366" y2="340.3" stroke="#dd1111" stroke-width="1"/>
<line x1="360" y1="340.3" x2="380" y2="340.3" stroke="#dd1111" stroke-width="1.3" stroke-dasharray="5 4 2 40"/>
<line x1="352" y1="368.2" x2="366" y2="368.2" stroke="#dd1111" stroke-width="1"/>
<line x1="360" y1="368.2" x2="380" y2="368.2" stroke="#dd1111" stroke-width="1.3" stroke-dasharray="5 4 2 40"/>
<line x1="352" y1="472.3" x2="366" y2="472.3" stroke="#dd1111" stroke-width="1"/>
<line x1="360" y1="472.3" x2="380" y2="472.3" stroke="#dd1111" stroke-width="1.3" stroke-dasharray="5 4 2 40"/>
<line x1="352" y1="500.1" x2="366" y2="500.1" stroke="#dd1111" stroke-width="1"/>
<line x1="360" y1="500.1" x2="380" y2="500.1" stroke="#dd1111" stroke-width="1.3" stroke-dasharray="5 4 2 40"/>
<line x1="352" y1="582.1" x2="366" y2="582.1" stroke="#dd1111" stroke-width="1"/>
<line x1="360" y1="582.1" x2="380" y2="582.1" stroke="#dd1111" stroke-width="1.3" stroke-dasharray="5 4 2 40"/>
<line x1="352" y1="609.8" x2="366" y2="609.8" stroke="#dd1111" stroke-width="1"/>
<line x1="360" y1="609.8" x2="380" y2="609.8" stroke="#dd1111" stroke-width="1.3" stroke-dasharray="5 4 2 40"/>
<line x1="352" y1="714.2" x2="366" y2="714.2" stroke="#dd1111" stroke-width="1"/>
<line x1="360" y1="714.2" x2="380" y2="714.2" stroke="#dd1111" stroke-width="1.3" stroke-dasharray="5 4 2 40"/>
<line x1="352" y1="742.1" x2="366" y2="742.1" stroke="#dd1111" stroke-width="1"/>
<line x1="360" y1="742.1" x2="380" y2="742.1" stroke="#dd1111" stroke-width="1.3" stroke-dasharray="5 4 2 40"/>
<line x1="412" y1="776.4" x2="1020.6" y2="776.4" stroke="#dd1111" stroke-width="1.3"/>
<line x1="412" y1="760" x2="412" y2="780" stroke="#dd1111" stroke-width="1.3"/>
<line x1="484.8" y1="760" x2="484.8" y2="780" stroke="#dd1111" stroke-width="1.3"/>
<line x1="498.4" y1="760" x2="498.4" y2="780" stroke="#dd1111" stroke-width="1.3"/>
<line x1="608.2" y1="760" x2="608.2" y2="780" stroke="#dd1111" stroke-width="1.3"/>
<line x1="718.1" y1="760" x2="718.1" y2="780" stroke="#dd1111" stroke-width="1.3"/>
<line x1="828" y1="760" x2="828" y2="780" stroke="#dd1111" stroke-width="1.3"/>
<line x1="938" y1="760" x2="938" y2="780" stroke="#dd1111" stroke-width="1.3"/>
<line x1="992.8" y1="760" x2="992.8" y2="780" stroke="#dd1111" stroke-width="1.3"/>
<line x1="1020.6" y1="760" x2="1020.6" y2="780" stroke="#dd1111" stroke-width="1.3"/>
<line x1="490" y1="758.2" x2="521" y2="758.2" stroke="#dd1111" stroke-width="1"/>
<text x="448" y="773.5" font-family="Liberation Sans" font-size="7" fill="#ffffff" text-anchor="middle" font-weight="bold" textLength="22" lengthAdjust="spacingAndGlyphs">10000</text>
<text x="491" y="773.5" font-family="Liberation Sans" font-size="7" fill="#ffffff" text-anchor="middle" font-weight="bold" textLength="12" lengthAdjust="spacingAndGlyphs">100</text>
<text x="553" y="773.5" font-family="Liberation Sans" font-size="7" fill="#ffffff" text-anchor="middle" font-weight="bold" textLength="11" lengthAdjust="spacingAndGlyphs">800</text>
<text x="663" y="773.5" font-family="Liberation Sans" font-size="7" fill="#ffffff" text-anchor="middle" font-weight="bold" textLength="11" lengthAdjust="spacingAndGlyphs">800</text>
<text x="773" y="773.5" font-family="Liberation Sans" font-size="7" fill="#ffffff" text-anchor="middle" font-weight="bold" textLength="11" lengthAdjust="spacingAndGlyphs">800</text>
<text x="883" y="773.5" font-family="Liberation Sans" font-size="7" fill="#ffffff" text-anchor="middle" font-weight="bold" textLength="11" lengthAdjust="spacingAndGlyphs">800</text>
<text x="965" y="773.5" font-family="Liberation Sans" font-size="7" fill="#ffffff" text-anchor="middle" font-weight="bold" textLength="11" lengthAdjust="spacingAndGlyphs">400</text>
<text x="1006" y="773.5" font-family="Liberation Sans" font-size="7" fill="#ffffff" text-anchor="middle" font-weight="bold" textLength="11" lengthAdjust="spacingAndGlyphs">200</text>
<text x="506" y="756" font-family="Liberation Sans" font-size="6.5" fill="#ffffff" text-anchor="middle" font-weight="bold" textLength="11" lengthAdjust="spacingAndGlyphs">100</text>
<text x="356.5" y="354" font-family="Liberation Sans" font-size="6.5" fill="#ffffff" text-anchor="middle" font-weight="bold" textLength="18" lengthAdjust="spacingAndGlyphs" transform="rotate(-90,356.5,354)">203.5</text>
<text x="356.5" y="420" font-family="Liberation Sans" font-size="6.5" fill="#ffffff" text-anchor="middle" font-weight="bold" textLength="11" lengthAdjust="spacingAndGlyphs" transform="rotate(-90,356.5,420)">760</text>
<text x="356.5" y="486" font-family="Liberation Sans" font-size="6.5" fill="#ffffff" text-anchor="middle" font-weight="bold" textLength="11" lengthAdjust="spacingAndGlyphs" transform="rotate(-90,356.5,486)">200</text>
<text x="356.5" y="541" font-family="Liberation Sans" font-size="6.5" fill="#ffffff" text-anchor="middle" font-weight="bold" textLength="11" lengthAdjust="spacingAndGlyphs" transform="rotate(-90,356.5,541)">600</text>
<text x="356.5" y="596" font-family="Liberation Sans" font-size="6.5" fill="#ffffff" text-anchor="middle" font-weight="bold" textLength="11" lengthAdjust="spacingAndGlyphs" transform="rotate(-90,356.5,596)">200</text>
<text x="356.5" y="662" font-family="Liberation Sans" font-size="6.5" fill="#ffffff" text-anchor="middle" font-weight="bold" textLength="11" lengthAdjust="spacingAndGlyphs" transform="rotate(-90,356.5,662)">760</text>
<text x="356.5" y="728" font-family="Liberation Sans" font-size="6.5" fill="#ffffff" text-anchor="middle" font-weight="bold" textLength="18" lengthAdjust="spacingAndGlyphs" transform="rotate(-90,356.5,728)">203.5</text>
<path d="M498,462.5 L402,462.5 L395.6,540 L402,620 L498,620" fill="none" stroke="#f07e7e" stroke-width="1.1" stroke-dasharray="4 2.5"/>
<path d="M611,503 L681,579 M681,503 L611,579" stroke="#8a8a8a" stroke-width="1" stroke-dasharray="12 3 2 3"/>
<path d="M831,509 L853,573 M853,509 L831,573" stroke="#8a8a8a" stroke-width="1" stroke-dasharray="12 3 2 3"/>
<path d="M981,597 L992,609 M992,597 L981,609 M981,611 L992,621 M992,611 L981,621" stroke="#8a8a8a" stroke-width="1"/>
<path d="M980,596 L980,622" fill="none" stroke="#f07e7e" stroke-width="1.1" stroke-dasharray="3 2"/>
<path d="M831,663 L853,711 M853,663 L831,711" stroke="#8a8a8a" stroke-width="1" stroke-dasharray="12 3 2 3"/>
<path d="M491.0,366.9L521.0,366.9M491.0,369.5L521.0,369.5M519.9,367.6L527.9,353.4M522.1,368.8L530.1,354.6M529.7,352.9L553.7,367.1M528.3,355.1L552.3,369.3M553.0,366.9L576.0,366.9M553.0,369.5L576.0,369.5M574.9,367.6L582.9,353.4M577.1,368.8L585.1,354.6M584.7,352.9L608.7,367.1M583.3,355.1L607.3,369.3M608.0,366.9L631.0,366.9M608.0,369.5L631.0,369.5M629.9,367.6L637.9,353.4M632.1,368.8L640.1,354.6M639.7,352.9L663.7,367.1M638.3,355.1L662.3,369.3M663.0,366.9L686.0,366.9M663.0,369.5L686.0,369.5M684.9,367.6L692.9,353.4M687.1,368.8L695.1,354.6M694.7,352.9L718.7,367.1M693.3,355.1L717.3,369.3M718.0,366.9L741.0,366.9M718.0,369.5L741.0,369.5M739.9,367.6L747.9,353.4M742.1,368.8L750.1,354.6M749.7,352.9L773.7,367.1M748.3,355.1L772.3,369.3M773.0,366.9L796.0,366.9M773.0,369.5L796.0,369.5M794.9,367.6L802.9,353.4M797.1,368.8L805.1,354.6M804.7,352.9L828.7,367.1M803.3,355.1L827.3,369.3M828.0,366.9L851.0,366.9M828.0,369.5L851.0,369.5M849.9,367.6L857.9,353.4M852.1,368.8L860.1,354.6M859.7,352.9L883.7,367.1M858.3,355.1L882.3,369.3M883.0,366.9L906.0,366.9M883.0,369.5L906.0,369.5M904.9,367.6L912.9,353.4M907.1,368.8L915.1,354.6M914.7,352.9L938.7,367.1M913.3,355.1L937.3,369.3M938.0,366.9L961.0,366.9M938.0,369.5L961.0,369.5M959.9,367.6L967.9,353.4M962.1,368.8L970.1,354.6M969.7,352.9L993.7,367.1M968.3,355.1L992.3,369.3M492.3,368.2L492.3,426.3M489.7,368.2L489.7,426.3M491.0,425.0L525.0,425.0M491.0,427.6L525.0,427.6M499.7,426.3L499.7,461.0M497.1,426.3L497.1,461.0M498.4,459.7L525.0,459.7M498.4,462.3L525.0,462.3M523.7,461.0L523.7,426.3M526.3,461.0L526.3,426.3M554.3,368.2L554.3,461.0M551.7,368.2L551.7,461.0M540.0,459.7L567.0,459.7M540.0,462.3L567.0,462.3M664.3,368.2L664.3,461.0M661.7,368.2L661.7,461.0M650.0,459.7L677.0,459.7M650.0,462.3L677.0,462.3M774.3,368.2L774.3,461.0M771.7,368.2L771.7,461.0M760.0,459.7L787.0,459.7M760.0,462.3L787.0,462.3M884.3,368.2L884.3,461.0M881.7,368.2L881.7,461.0M870.0,459.7L897.0,459.7M870.0,462.3L897.0,462.3M609.5,368.2L609.5,461.0M606.9,368.2L606.9,461.0M581.2,425.0L636.2,425.0M581.2,427.6L636.2,427.6M582.5,426.3L582.5,461.0M579.9,426.3L579.9,461.0M581.2,459.7L636.2,459.7M581.2,462.3L636.2,462.3M634.9,461.0L634.9,426.3M637.5,461.0L637.5,426.3M719.4,368.2L719.4,461.0M716.8,368.2L716.8,461.0M691.1,425.0L746.1,425.0M691.1,427.6L746.1,427.6M692.4,426.3L692.4,461.0M689.8,426.3L689.8,461.0M691.1,459.7L746.1,459.7M691.1,462.3L746.1,462.3M744.8,461.0L744.8,426.3M747.4,461.0L747.4,426.3M829.3,368.2L829.3,461.0M826.7,368.2L826.7,461.0M801.0,425.0L856.0,425.0M801.0,427.6L856.0,427.6M802.3,426.3L802.3,461.0M799.7,426.3L799.7,461.0M801.0,459.7L856.0,459.7M801.0,462.3L856.0,462.3M854.7,461.0L854.7,426.3M857.3,461.0L857.3,426.3M939.3,368.2L939.3,461.0M936.7,368.2L936.7,461.0M910.0,425.0L938.0,425.0M910.0,427.6L938.0,427.6M911.3,426.3L911.3,461.0M908.7,426.3L908.7,461.0M910.0,459.7L951.0,459.7M910.0,462.3L951.0,462.3M965.0,425.0L992.8,425.0M965.0,427.6L992.8,427.6M966.3,426.3L966.3,461.0M963.7,426.3L963.7,461.0M965.0,459.7L992.8,459.7M965.0,462.3L992.8,462.3M489.7,714.2L489.7,656.1M492.3,714.2L492.3,656.1M491.0,654.8L525.0,654.8M491.0,657.4L525.0,657.4M497.1,656.1L497.1,621.4M499.7,656.1L499.7,621.4M498.4,620.1L525.0,620.1M498.4,622.7L525.0,622.7M526.3,621.4L526.3,656.1M523.7,621.4L523.7,656.1M551.7,714.2L551.7,621.4M554.3,714.2L554.3,621.4M540.0,620.1L567.0,620.1M540.0,622.7L567.0,622.7M661.7,714.2L661.7,621.4M664.3,714.2L664.3,621.4M650.0,620.1L677.0,620.1M650.0,622.7L677.0,622.7M771.7,714.2L771.7,621.4M774.3,714.2L774.3,621.4M760.0,620.1L787.0,620.1M760.0,622.7L787.0,622.7M881.7,714.2L881.7,621.4M884.3,714.2L884.3,621.4M870.0,620.1L897.0,620.1M870.0,622.7L897.0,622.7M606.9,714.2L606.9,621.4M609.5,714.2L609.5,621.4M581.2,654.8L636.2,654.8M581.2,657.4L636.2,657.4M579.9,656.1L579.9,621.4M582.5,656.1L582.5,621.4M581.2,620.1L636.2,620.1M581.2,622.7L636.2,622.7M637.5,621.4L637.5,656.1M634.9,621.4L634.9,656.1M716.8,714.2L716.8,621.4M719.4,714.2L719.4,621.4M691.1,654.8L746.1,654.8M691.1,657.4L746.1,657.4M689.8,656.1L689.8,621.4M692.4,656.1L692.4,621.4M691.1,620.1L746.1,620.1M691.1,622.7L746.1,622.7M747.4,621.4L747.4,656.1M744.8,621.4L744.8,656.1M826.7,714.2L826.7,621.4M829.3,714.2L829.3,621.4M801.0,654.8L856.0,654.8M801.0,657.4L856.0,657.4M799.7,656.1L799.7,621.4M802.3,656.1L802.3,621.4M801.0,620.1L856.0,620.1M801.0,622.7L856.0,622.7M857.3,621.4L857.3,656.1M854.7,621.4L854.7,656.1M936.7,714.2L936.7,621.4M939.3,714.2L939.3,621.4M910.0,654.8L938.0,654.8M910.0,657.4L938.0,657.4M908.7,656.1L908.7,621.4M911.3,656.1L911.3,621.4M910.0,620.1L951.0,620.1M910.0,622.7L951.0,622.7M965.0,654.8L992.8,654.8M965.0,657.4L992.8,657.4M963.7,656.1L963.7,621.4M966.3,656.1L966.3,621.4M965.0,620.1L992.8,620.1M965.0,622.7L992.8,622.7M491.0,712.9L521.0,712.9M491.0,715.5L521.0,715.5M522.1,713.5L530.1,727.3M519.9,714.9L527.9,728.7M528.4,726.9L552.4,713.1M529.6,729.1L553.6,715.3M553.0,712.9L576.0,712.9M553.0,715.5L576.0,715.5M577.1,713.5L585.1,727.3M574.9,714.9L582.9,728.7M583.4,726.9L607.4,713.1M584.6,729.1L608.6,715.3M608.0,712.9L631.0,712.9M608.0,715.5L631.0,715.5M632.1,713.5L640.1,727.3M629.9,714.9L637.9,728.7M638.4,726.9L662.4,713.1M639.6,729.1L663.6,715.3M663.0,712.9L686.0,712.9M663.0,715.5L686.0,715.5M687.1,713.5L695.1,727.3M684.9,714.9L692.9,728.7M693.4,726.9L717.4,713.1M694.6,729.1L718.6,715.3M718.0,712.9L741.0,712.9M718.0,715.5L741.0,715.5M742.1,713.5L750.1,727.3M739.9,714.9L747.9,728.7M748.4,726.9L772.4,713.1M749.6,729.1L773.6,715.3M773.0,712.9L796.0,712.9M773.0,715.5L796.0,715.5M797.1,713.5L805.1,727.3M794.9,714.9L802.9,728.7M803.4,726.9L827.4,713.1M804.6,729.1L828.6,715.3M828.0,712.9L851.0,712.9M828.0,715.5L851.0,715.5M852.1,713.5L860.1,727.3M849.9,714.9L857.9,728.7M858.4,726.9L882.4,713.1M859.6,729.1L883.6,715.3M883.0,712.9L906.0,712.9M883.0,715.5L906.0,715.5M907.1,713.5L915.1,727.3M904.9,714.9L912.9,728.7M913.4,726.9L937.4,713.1M914.6,729.1L938.6,715.3M938.0,712.9L961.0,712.9M938.0,715.5L961.0,715.5M962.1,713.5L970.1,727.3M959.9,714.9L967.9,728.7M968.4,726.9L992.4,713.1M969.6,729.1L993.6,715.3M513.5,461.0L513.5,621.4M510.9,461.0L510.9,621.4M608.2,498.8L684.0,498.8M608.2,501.4L684.0,501.4M685.3,500.1L685.3,582.1M682.7,500.1L682.7,582.1M684.0,583.4L608.2,583.4M684.0,580.8L608.2,580.8M606.9,582.1L606.9,500.1M609.5,582.1L609.5,500.1M752.0,498.8L794.5,498.8M752.0,501.4L794.5,501.4M753.3,500.1L753.3,582.1M750.7,500.1L750.7,582.1M752.0,580.8L794.5,580.8M752.0,583.4L794.5,583.4M793.2,582.1L793.2,500.1M795.8,582.1L795.8,500.1M752.0,563.7L794.5,563.7M752.0,566.3L794.5,566.3M794.5,553.7L828.0,553.7M794.5,556.3L828.0,556.3M808.3,572.0L808.3,589.0M805.7,572.0L805.7,589.0M807.0,587.7L828.0,587.7M807.0,590.3L828.0,590.3M828.0,498.8L856.0,498.8M828.0,501.4L856.0,501.4M857.3,500.1L857.3,582.1M854.7,500.1L854.7,582.1M856.0,583.4L828.0,583.4M856.0,580.8L828.0,580.8M828.0,505.4L856.0,505.4M828.0,508.0L856.0,508.0M828.0,574.1L856.0,574.1M828.0,576.7L856.0,576.7M903.3,484.7L992.8,484.7M903.3,487.3L992.8,487.3M904.6,486.0L904.6,513.7M902.0,486.0L902.0,513.7M903.3,512.4L938.0,512.4M903.3,515.0L938.0,515.0M903.3,540.0L992.8,540.0M903.3,542.6L992.8,542.6M904.6,528.0L904.6,554.0M902.0,528.0L902.0,554.0M903.3,567.1L938.0,567.1M903.3,569.7L938.0,569.7M904.6,568.4L904.6,595.9M902.0,568.4L902.0,595.9M903.3,594.6L992.8,594.6M903.3,597.2L992.8,597.2M939.3,486.0L939.3,513.7M936.7,486.0L936.7,513.7M939.3,568.4L939.3,595.9M936.7,568.4L936.7,595.9M828.0,658.7L856.0,658.7M828.0,661.3L856.0,661.3M857.3,660.0L857.3,714.2M854.7,660.0L854.7,714.2" fill="none" stroke="#f07e7e" stroke-width="1.1" stroke-dasharray="3.8 1.9"/>
<path d="M994.1,368.2L994.1,714.2M991.5,368.2L991.5,714.2M829.3,500.1L829.3,582.1M826.7,500.1L826.7,582.1" fill="none" stroke="#f07e7e" stroke-width="1.3" stroke-dasharray="3.5 1.2"/>
<line x1="455" y1="487" x2="472" y2="487" stroke="#dd1111" stroke-width="1.3"/>
<line x1="472" y1="487" x2="484.8" y2="472.3" stroke="#dd1111" stroke-width="1.2"/>
<line x1="472" y1="487" x2="484.8" y2="500.1" stroke="#dd1111" stroke-width="1.2"/>
<line x1="472" y1="487" x2="512.2" y2="500.1" stroke="#dd1111" stroke-width="1.2"/>
<line x1="455" y1="597" x2="472" y2="597" stroke="#dd1111" stroke-width="1.3"/>
<line x1="472" y1="597" x2="484.8" y2="582.1" stroke="#dd1111" stroke-width="1.2"/>
<line x1="472" y1="597" x2="512.2" y2="582.1" stroke="#dd1111" stroke-width="1.2"/>
<line x1="472" y1="597" x2="484.8" y2="609.8" stroke="#dd1111" stroke-width="1.2"/>
<path d="M489.2,366.4h3.6v3.6h-3.6zM489.2,712.4h3.6v3.6h-3.6zM551.2,366.4h3.6v3.6h-3.6zM551.2,712.4h3.6v3.6h-3.6zM661.2,366.4h3.6v3.6h-3.6zM661.2,712.4h3.6v3.6h-3.6zM771.2,366.4h3.6v3.6h-3.6zM771.2,712.4h3.6v3.6h-3.6zM881.2,366.4h3.6v3.6h-3.6zM881.2,712.4h3.6v3.6h-3.6zM496.6,459.2h3.6v3.6h-3.6zM523.2,459.2h3.6v3.6h-3.6zM551.2,459.2h3.6v3.6h-3.6zM579.4,459.2h3.6v3.6h-3.6zM606.4,459.2h3.6v3.6h-3.6zM634.4,459.2h3.6v3.6h-3.6zM661.2,459.2h3.6v3.6h-3.6zM689.3,459.2h3.6v3.6h-3.6zM716.3,459.2h3.6v3.6h-3.6zM744.3,459.2h3.6v3.6h-3.6zM771.2,459.2h3.6v3.6h-3.6zM799.2,459.2h3.6v3.6h-3.6zM826.2,459.2h3.6v3.6h-3.6zM854.2,459.2h3.6v3.6h-3.6zM908.2,459.2h3.6v3.6h-3.6zM936.2,459.2h3.6v3.6h-3.6zM949.2,459.2h3.6v3.6h-3.6zM963.2,459.2h3.6v3.6h-3.6zM991.0,459.2h3.6v3.6h-3.6zM496.6,619.6h3.6v3.6h-3.6zM523.2,619.6h3.6v3.6h-3.6zM551.2,619.6h3.6v3.6h-3.6zM579.4,619.6h3.6v3.6h-3.6zM606.4,619.6h3.6v3.6h-3.6zM634.4,619.6h3.6v3.6h-3.6zM661.2,619.6h3.6v3.6h-3.6zM689.3,619.6h3.6v3.6h-3.6zM716.3,619.6h3.6v3.6h-3.6zM744.3,619.6h3.6v3.6h-3.6zM771.2,619.6h3.6v3.6h-3.6zM799.2,619.6h3.6v3.6h-3.6zM826.2,619.6h3.6v3.6h-3.6zM854.2,619.6h3.6v3.6h-3.6zM908.2,619.6h3.6v3.6h-3.6zM936.2,619.6h3.6v3.6h-3.6zM949.2,619.6h3.6v3.6h-3.6zM963.2,619.6h3.6v3.6h-3.6zM991.0,619.6h3.6v3.6h-3.6zM489.2,424.5h3.6v3.6h-3.6zM579.4,424.5h3.6v3.6h-3.6zM634.4,424.5h3.6v3.6h-3.6zM689.3,424.5h3.6v3.6h-3.6zM744.3,424.5h3.6v3.6h-3.6zM799.2,424.5h3.6v3.6h-3.6zM854.2,424.5h3.6v3.6h-3.6zM908.2,424.5h3.6v3.6h-3.6zM963.2,424.5h3.6v3.6h-3.6zM489.2,654.3h3.6v3.6h-3.6zM579.4,654.3h3.6v3.6h-3.6zM634.4,654.3h3.6v3.6h-3.6zM689.3,654.3h3.6v3.6h-3.6zM744.3,654.3h3.6v3.6h-3.6zM799.2,654.3h3.6v3.6h-3.6zM854.2,654.3h3.6v3.6h-3.6zM908.2,654.3h3.6v3.6h-3.6zM963.2,654.3h3.6v3.6h-3.6zM646.2,498.3h3.6v3.6h-3.6zM682.2,538.2h3.6v3.6h-3.6zM901.5,484.2h3.6v3.6h-3.6zM936.2,484.2h3.6v3.6h-3.6zM991.0,484.2h3.6v3.6h-3.6zM901.5,511.9h3.6v3.6h-3.6zM936.2,511.9h3.6v3.6h-3.6zM901.5,566.6h3.6v3.6h-3.6zM936.2,566.6h3.6v3.6h-3.6zM901.5,594.1h3.6v3.6h-3.6zM936.2,594.1h3.6v3.6h-3.6zM991.0,594.1h3.6v3.6h-3.6zM953.2,539.5h3.6v3.6h-3.6zM826.2,504.9h3.6v3.6h-3.6zM550.2,412.2h3.6v3.6h-3.6zM550.2,666.2h3.6v3.6h-3.6z" fill="#f4f000"/>
<path d="M495.8,365.6h5.2v5.2h-5.2zM495.8,711.6h5.2v5.2h-5.2zM605.6,365.6h5.2v5.2h-5.2zM605.6,711.6h5.2v5.2h-5.2zM715.5,365.6h5.2v5.2h-5.2zM715.5,711.6h5.2v5.2h-5.2zM825.4,365.6h5.2v5.2h-5.2zM825.4,711.6h5.2v5.2h-5.2zM935.4,365.6h5.2v5.2h-5.2zM935.4,711.6h5.2v5.2h-5.2zM990.2,365.6h5.2v5.2h-5.2zM990.2,711.6h5.2v5.2h-5.2zM495.8,423.7h5.2v5.2h-5.2zM605.6,423.7h5.2v5.2h-5.2zM715.5,423.7h5.2v5.2h-5.2zM825.4,423.7h5.2v5.2h-5.2zM935.4,423.7h5.2v5.2h-5.2zM990.2,423.7h5.2v5.2h-5.2zM495.8,653.5h5.2v5.2h-5.2zM605.6,653.5h5.2v5.2h-5.2zM715.5,653.5h5.2v5.2h-5.2zM825.4,653.5h5.2v5.2h-5.2zM935.4,653.5h5.2v5.2h-5.2zM990.2,653.5h5.2v5.2h-5.2zM482.2,469.7h5.2v5.2h-5.2zM482.2,497.5h5.2v5.2h-5.2zM509.6,497.5h5.2v5.2h-5.2zM482.2,579.5h5.2v5.2h-5.2zM509.6,579.5h5.2v5.2h-5.2zM482.2,607.2h5.2v5.2h-5.2zM605.6,497.5h5.2v5.2h-5.2zM605.6,579.5h5.2v5.2h-5.2zM715.5,497.5h5.2v5.2h-5.2zM715.5,579.5h5.2v5.2h-5.2zM825.4,497.5h5.2v5.2h-5.2zM825.4,579.5h5.2v5.2h-5.2zM935.4,497.5h5.2v5.2h-5.2zM935.4,579.5h5.2v5.2h-5.2zM990.2,497.5h5.2v5.2h-5.2zM990.2,579.5h5.2v5.2h-5.2z" fill="none" stroke="#d8cc10" stroke-width="1"/>
<path d="M519.5,366.7h3v3h-3zM527.5,352.5h3v3h-3zM519.5,712.7h3v3h-3zM527.5,726.5h3v3h-3zM551.5,366.7h3v3h-3zM574.5,366.7h3v3h-3zM582.5,352.5h3v3h-3zM574.5,712.7h3v3h-3zM582.5,726.5h3v3h-3zM606.5,366.7h3v3h-3zM629.5,366.7h3v3h-3zM637.5,352.5h3v3h-3zM629.5,712.7h3v3h-3zM637.5,726.5h3v3h-3zM661.5,366.7h3v3h-3zM684.5,366.7h3v3h-3zM692.5,352.5h3v3h-3zM684.5,712.7h3v3h-3zM692.5,726.5h3v3h-3zM716.5,366.7h3v3h-3zM739.5,366.7h3v3h-3zM747.5,352.5h3v3h-3zM739.5,712.7h3v3h-3zM747.5,726.5h3v3h-3zM771.5,366.7h3v3h-3zM794.5,366.7h3v3h-3zM802.5,352.5h3v3h-3zM794.5,712.7h3v3h-3zM802.5,726.5h3v3h-3zM826.5,366.7h3v3h-3zM849.5,366.7h3v3h-3zM857.5,352.5h3v3h-3zM849.5,712.7h3v3h-3zM857.5,726.5h3v3h-3zM881.5,366.7h3v3h-3zM904.5,366.7h3v3h-3zM912.5,352.5h3v3h-3zM904.5,712.7h3v3h-3zM912.5,726.5h3v3h-3zM936.5,366.7h3v3h-3zM959.5,366.7h3v3h-3zM967.5,352.5h3v3h-3zM959.5,712.7h3v3h-3zM967.5,726.5h3v3h-3zM991.5,366.7h3v3h-3z" fill="#f0a070"/>
<text x="486" y="362" font-family="Liberation Sans" font-size="7" fill="#ffffff" text-anchor="middle" font-weight="bold" textLength="16" lengthAdjust="spacingAndGlyphs">K1-1</text>
<text x="608" y="378" font-family="Liberation Sans" font-size="7" fill="#ffffff" text-anchor="middle" font-weight="bold" textLength="16" lengthAdjust="spacingAndGlyphs">K1-1</text>
<text x="663" y="378" font-family="Liberation Sans" font-size="7" fill="#ffffff" text-anchor="middle" font-weight="bold" textLength="16" lengthAdjust="spacingAndGlyphs">K1-2</text>
<text x="718" y="378" font-family="Liberation Sans" font-size="7" fill="#ffffff" text-anchor="middle" font-weight="bold" textLength="16" lengthAdjust="spacingAndGlyphs">K1-1</text>
<text x="827" y="378" font-family="Liberation Sans" font-size="7" fill="#ffffff" text-anchor="middle" font-weight="bold" textLength="16" lengthAdjust="spacingAndGlyphs">K1-1</text>
<text x="937" y="378" font-family="Liberation Sans" font-size="7" fill="#ffffff" text-anchor="middle" font-weight="bold" textLength="16" lengthAdjust="spacingAndGlyphs">K1-1</text>
<text x="1002" y="378" font-family="Liberation Sans" font-size="7" fill="#ffffff" text-anchor="middle" font-weight="bold" textLength="16" lengthAdjust="spacingAndGlyphs">K1-1</text>
<text x="506" y="422" font-family="Liberation Sans" font-size="7" fill="#ffffff" text-anchor="middle" font-weight="bold" textLength="16" lengthAdjust="spacingAndGlyphs">K1-2</text>
<text x="608" y="435" font-family="Liberation Sans" font-size="7" fill="#ffffff" text-anchor="middle" font-weight="bold" textLength="16" lengthAdjust="spacingAndGlyphs">K1-2</text>
<text x="663" y="422" font-family="Liberation Sans" font-size="7" fill="#ffffff" text-anchor="middle" font-weight="bold" textLength="16" lengthAdjust="spacingAndGlyphs">K1-2</text>
<text x="718" y="422" font-family="Liberation Sans" font-size="7" fill="#ffffff" text-anchor="middle" font-weight="bold" textLength="16" lengthAdjust="spacingAndGlyphs">K1-2</text>
<text x="774" y="422" font-family="Liberation Sans" font-size="7" fill="#ffffff" text-anchor="middle" font-weight="bold" textLength="16" lengthAdjust="spacingAndGlyphs">K1-2</text>
<text x="827" y="422" font-family="Liberation Sans" font-size="7" fill="#ffffff" text-anchor="middle" font-weight="bold" textLength="16" lengthAdjust="spacingAndGlyphs">K1-2</text>
<text x="882" y="422" font-family="Liberation Sans" font-size="7" fill="#ffffff" text-anchor="middle" font-weight="bold" textLength="16" lengthAdjust="spacingAndGlyphs">K1-2</text>
<text x="948" y="422" font-family="Liberation Sans" font-size="7" fill="#ffffff" text-anchor="middle" font-weight="bold" textLength="16" lengthAdjust="spacingAndGlyphs">K1-2</text>
<text x="1003" y="422" font-family="Liberation Sans" font-size="7" fill="#ffffff" text-anchor="middle" font-weight="bold" textLength="16" lengthAdjust="spacingAndGlyphs">K1-2</text>
<text x="487" y="460" font-family="Liberation Sans" font-size="7" fill="#ffffff" text-anchor="middle" font-weight="bold" textLength="16" lengthAdjust="spacingAndGlyphs">K1-2</text>
<text x="552" y="469" font-family="Liberation Sans" font-size="7" fill="#ffffff" text-anchor="middle" font-weight="bold" textLength="16" lengthAdjust="spacingAndGlyphs">K1-2</text>
<text x="463" y="485" font-family="Liberation Sans" font-size="7" fill="#ffffff" text-anchor="middle" font-weight="bold" textLength="16" lengthAdjust="spacingAndGlyphs">K1-1</text>
<text x="599" y="509" font-family="Liberation Sans" font-size="7" fill="#ffffff" text-anchor="middle" font-weight="bold" textLength="16" lengthAdjust="spacingAndGlyphs">K1-1</text>
<text x="599" y="578" font-family="Liberation Sans" font-size="7" fill="#ffffff" text-anchor="middle" font-weight="bold" textLength="16" lengthAdjust="spacingAndGlyphs">K1-1</text>
<text x="463" y="595" font-family="Liberation Sans" font-size="7" fill="#ffffff" text-anchor="middle" font-weight="bold" textLength="16" lengthAdjust="spacingAndGlyphs">K1-1</text>
<text x="708" y="509" font-family="Liberation Sans" font-size="7" fill="#ffffff" text-anchor="middle" font-weight="bold" textLength="16" lengthAdjust="spacingAndGlyphs">K1-1</text>
<text x="708" y="578" font-family="Liberation Sans" font-size="7" fill="#ffffff" text-anchor="middle" font-weight="bold" textLength="16" lengthAdjust="spacingAndGlyphs">K1-1</text>
<text x="818" y="496" font-family="Liberation Sans" font-size="7" fill="#ffffff" text-anchor="middle" font-weight="bold" textLength="16" lengthAdjust="spacingAndGlyphs">K1-1</text>
<text x="839" y="590" font-family="Liberation Sans" font-size="7" fill="#ffffff" text-anchor="middle" font-weight="bold" textLength="16" lengthAdjust="spacingAndGlyphs">K1-1</text>
<text x="926" y="508" font-family="Liberation Sans" font-size="7" fill="#ffffff" text-anchor="middle" font-weight="bold" textLength="16" lengthAdjust="spacingAndGlyphs">K1-1</text>
<text x="926" y="579" font-family="Liberation Sans" font-size="7" fill="#ffffff" text-anchor="middle" font-weight="bold" textLength="16" lengthAdjust="spacingAndGlyphs">K1-1</text>
<text x="1004" y="497" font-family="Liberation Sans" font-size="7" fill="#ffffff" text-anchor="middle" font-weight="bold" textLength="16" lengthAdjust="spacingAndGlyphs">K1-1</text>
<text x="1004" y="579" font-family="Liberation Sans" font-size="7" fill="#ffffff" text-anchor="middle" font-weight="bold" textLength="16" lengthAdjust="spacingAndGlyphs">K1-1</text>
<text x="552" y="617" font-family="Liberation Sans" font-size="7" fill="#ffffff" text-anchor="middle" font-weight="bold" textLength="16" lengthAdjust="spacingAndGlyphs">K1-2</text>
<text x="487" y="626" font-family="Liberation Sans" font-size="7" fill="#ffffff" text-anchor="middle" font-weight="bold" textLength="16" lengthAdjust="spacingAndGlyphs">K1-2</text>
<text x="608" y="651" font-family="Liberation Sans" font-size="7" fill="#ffffff" text-anchor="middle" font-weight="bold" textLength="16" lengthAdjust="spacingAndGlyphs">K1-2</text>
<text x="507" y="667" font-family="Liberation Sans" font-size="7" fill="#ffffff" text-anchor="middle" font-weight="bold" textLength="16" lengthAdjust="spacingAndGlyphs">K1-2</text>
<text x="663" y="665" font-family="Liberation Sans" font-size="7" fill="#ffffff" text-anchor="middle" font-weight="bold" textLength="16" lengthAdjust="spacingAndGlyphs">K1-2</text>
<text x="718" y="665" font-family="Liberation Sans" font-size="7" fill="#ffffff" text-anchor="middle" font-weight="bold" textLength="16" lengthAdjust="spacingAndGlyphs">K1-2</text>
<text x="774" y="665" font-family="Liberation Sans" font-size="7" fill="#ffffff" text-anchor="middle" font-weight="bold" textLength="16" lengthAdjust="spacingAndGlyphs">K1-2</text>
<text x="839" y="652" font-family="Liberation Sans" font-size="7" fill="#ffffff" text-anchor="middle" font-weight="bold" textLength="16" lengthAdjust="spacingAndGlyphs">K1-2</text>
<text x="882" y="665" font-family="Liberation Sans" font-size="7" fill="#ffffff" text-anchor="middle" font-weight="bold" textLength="16" lengthAdjust="spacingAndGlyphs">K1-2</text>
<text x="948" y="665" font-family="Liberation Sans" font-size="7" fill="#ffffff" text-anchor="middle" font-weight="bold" textLength="16" lengthAdjust="spacingAndGlyphs">K1-2</text>
<text x="1003" y="665" font-family="Liberation Sans" font-size="7" fill="#ffffff" text-anchor="middle" font-weight="bold" textLength="16" lengthAdjust="spacingAndGlyphs">K1-2</text>
<text x="608" y="708" font-family="Liberation Sans" font-size="7" fill="#ffffff" text-anchor="middle" font-weight="bold" textLength="16" lengthAdjust="spacingAndGlyphs">K1-1</text>
<text x="718" y="708" font-family="Liberation Sans" font-size="7" fill="#ffffff" text-anchor="middle" font-weight="bold" textLength="16" lengthAdjust="spacingAndGlyphs">K1-1</text>
<text x="773" y="708" font-family="Liberation Sans" font-size="7" fill="#ffffff" text-anchor="middle" font-weight="bold" textLength="16" lengthAdjust="spacingAndGlyphs">K1-2</text>
<text x="816" y="708" font-family="Liberation Sans" font-size="7" fill="#ffffff" text-anchor="middle" font-weight="bold" textLength="16" lengthAdjust="spacingAndGlyphs">K1-1</text>
<text x="854" y="722" font-family="Liberation Sans" font-size="7" fill="#ffffff" text-anchor="middle" font-weight="bold" textLength="16" lengthAdjust="spacingAndGlyphs">K1-2</text>
<text x="937" y="708" font-family="Liberation Sans" font-size="7" fill="#ffffff" text-anchor="middle" font-weight="bold" textLength="16" lengthAdjust="spacingAndGlyphs">K1-1</text>
<text x="1002" y="708" font-family="Liberation Sans" font-size="7" fill="#ffffff" text-anchor="middle" font-weight="bold" textLength="16" lengthAdjust="spacingAndGlyphs">K1-1</text>
<text x="486" y="722" font-family="Liberation Sans" font-size="7" fill="#ffffff" text-anchor="middle" font-weight="bold" textLength="16" lengthAdjust="spacingAndGlyphs">K1-1</text>
<text x="753" y="882.8" font-family="Liberation Sans" font-size="18" fill="#00e8f0" textLength="269" lengthAdjust="spacingAndGlyphs">DENAH KOLOM LANTAI SATU</text>
<line x1="754" y1="887.5" x2="1021" y2="887.5" stroke="#00e8f0" stroke-width="1.3"/>
<text x="956" y="896.6" font-family="Liberation Sans" font-size="8.6" fill="#00e8f0" textLength="63" lengthAdjust="spacingAndGlyphs">SKALA 1 : 200</text>
<text x="1790.00" y="937" font-family="Liberation Sans" font-size="10.70" fill="#f0f0f0" text-anchor="start" textLength="64.00" lengthAdjust="spacing" transform="scale(0.5,1)">CATATAN:</text>
<line x1="895" y1="938.5" x2="927" y2="938.5" stroke="#f0f0f0" stroke-width="0.8"/>
<text x="1864.58" y="952" font-family="Liberation Sans" font-size="11.52" fill="#f4f4f4" text-anchor="start" textLength="389.58" lengthAdjust="spacing" transform="scale(0.48,1)">1. UNTUK PEMBESIAN LIHAT GAMBAR No: CIV-015</text>
<text x="2262.00" y="946.7" font-family="Liberation Sans" font-size="11.25" fill="#18e818" text-anchor="start" textLength="244.00" lengthAdjust="spacing" transform="scale(0.5,1)">DENAH KOLOM LANTAI SATU</text></svg>
<div class="t" style="left:4px;top:180px;color:#e6e6e6;letter-spacing:0.17px">[−][Top][2D Wireframe]</div>
<svg style="left:1845px;top:180px" width="60" height="16">
 <rect x="6" y="9" width="9" height="2.5" fill="#f0f0f0"/>
 <rect x="26.5" y="5.5" width="7" height="7" fill="none" stroke="#f0f0f0" stroke-width="1.6"/><path d="M29 3.5 H36 V10" fill="none" stroke="#f0f0f0" stroke-width="1.4"/>
 <path d="M46 3.5 L54 11.5 M54 3.5 L46 11.5" stroke="#f0f0f0" stroke-width="2"/>
</svg>
<svg style="left:1760px;top:210px" width="140" height="180">
 <circle cx="69.4" cy="68.5" r="53.1" fill="none" stroke="#4b4c4e" stroke-width="13"/>
 <circle cx="69.4" cy="68.5" r="53.1" fill="none" stroke="#3f6a5a" stroke-width="1" stroke-dasharray="1 5" opacity="0.6"/>
 <rect x="43" y="43" width="52" height="51.5" fill="#b3b5b5"/>
 <rect x="53" y="52.7" width="32" height="32" fill="#a6a9ae"/>
 <text x="69.4" y="74" text-anchor="middle" font-family="Liberation Sans" font-weight="bold" font-size="13" fill="#3e4044" textLength="22" lengthAdjust="spacingAndGlyphs">TOP</text>
 <text x="69.4" y="21" text-anchor="middle" font-family="Liberation Sans" font-weight="bold" font-size="21" fill="#bdbdbd" textLength="13.5" lengthAdjust="spacingAndGlyphs">N</text>
 <text x="69.4" y="134" text-anchor="middle" font-family="Liberation Sans" font-weight="bold" font-size="21" fill="#bdbdbd">S</text>
 <text x="12.5" y="77.4" text-anchor="middle" font-family="Liberation Sans" font-weight="bold" font-size="21" fill="#bdbdbd">W</text>
 <text x="125.4" y="77.4" text-anchor="middle" font-family="Liberation Sans" font-weight="bold" font-size="21" fill="#bdbdbd">E</text>
 <rect x="46.5" y="157" width="45.5" height="16" rx="4" fill="#8e939a" stroke="#676b70" stroke-width="1.6"/>
 <text x="49" y="169" font-family="Liberation Sans" font-size="11" fill="#383a3e" textLength="24.5" lengthAdjust="spacingAndGlyphs">WCS</text>
 <path d="M79 163.5 H88 L83.5 168 Z" fill="#a0a4aa" stroke="#5a5e62" stroke-width="0.8"/>
</svg>
<svg style="left:1875px;top:408px" width="34" height="214">
 <rect x="0.5" y="0.5" width="32" height="212" rx="4" fill="#4f5459" stroke="#3c4044"/>
 <circle cx="28" cy="5" r="3.5" fill="none" stroke="#6a6e72"/>
 <circle cx="16" cy="31" r="10" fill="none" stroke="#777b80" stroke-width="1.3"/><circle cx="16" cy="31" r="5.5" fill="none" stroke="#777b80" stroke-width="1.2"/>
 <path d="M13 50 H19 L16 53 Z" fill="#777b80"/>
 <line x1="3" y1="56" x2="29" y2="56" stroke="#5f6368"/>
 <path d="M9 82 L6 70 C6 67 9 67 10 70 L10 62 C10 59 13 59 13 62 L14 60 C14 57 17 57 17 60 L18 62 C18 59 21 59 21 62 V70 L23 67 C25 65 27 67 25 70 L20 82 Z" fill="none" stroke="#777b80" stroke-width="1.3"/>
 <path d="M5 87 L15 97 M5 87 V92 M5 87 H10 M15 87 L5 97 M5 97 H10 M5 97 V92 M25 87 L17 95 M25 87 H20 M25 87 V92" stroke="#777b80" stroke-width="1.2" fill="none"/>
 <circle cx="20" cy="100" r="4.5" fill="none" stroke="#777b80" stroke-width="1.3"/><line x1="23" y1="103" x2="28" y2="108" stroke="#777b80" stroke-width="1.8"/>
 <path d="M13 114 H19 L16 117 Z" fill="#777b80"/>
 <path d="M14 150 V126 L11 130 M14 126 L17 130 M17 126 V150" stroke="#777b80" stroke-width="1.2" fill="none"/><ellipse cx="16" cy="139" rx="11" ry="4.5" fill="none" stroke="#777b80" stroke-width="1.2"/>
 <path d="M13 158 H19 L16 161 Z" fill="#777b80"/>
 <line x1="3" y1="165" x2="29" y2="165" stroke="#5f6368"/>
 <rect x="5" y="170" width="6" height="6" fill="none" stroke="#777b80"/><rect x="13" y="170" width="6" height="6" fill="none" stroke="#777b80"/><rect x="21" y="170" width="6" height="6" fill="none" stroke="#777b80"/>
 <rect x="5" y="180" width="17" height="12" fill="none" stroke="#777b80"/><path d="M10 183 V189 L16 186 Z" fill="#777b80"/>
 <circle cx="28" cy="206" r="3.5" fill="none" stroke="#6a6e72"/>
</svg>
<svg style="left:0;top:910px" width="100" height="80">
 <path d="M22.5 6 L28 13 L33.5 6 M28 13 V19" fill="none" stroke="#f0f0f0" stroke-width="1.2"/>
 <line x1="20.5" y1="22" x2="20.5" y2="72" stroke="#f0f0f0" stroke-width="1.2"/>
 <line x1="20.5" y1="72.4" x2="71" y2="72.4" stroke="#f0f0f0" stroke-width="1.2"/>
 <rect x="16.5" y="67.5" width="9" height="9.5" fill="none" stroke="#f0f0f0" stroke-width="1.2"/>
 <path d="M75.5 58.5 L88 71 M88 58.5 L75.5 71" stroke="#f0f0f0" stroke-width="1.3"/>
</svg>
<div class="a" style="left:628px;top:903px;width:697px;height:30px;background:rgba(100,102,106,0.82);border-radius:3px"></div>
<div class="a mono" style="left:630px;top:904.5px;font-size:11.7px;line-height:15px;color:#d6d6d6;white-space:pre">Autodesk DWG.  This file is a TrustedDWG last saved by an Autodesk application or Autodesk licensed
application.</div>
<div class="a" style="left:628px;top:938px;width:60px;height:15px;background:rgba(100,102,106,0.9);border-radius:3px"></div>
<div class="a mono" style="left:630px;top:939px;font-size:11.7px;line-height:15px;color:#ececec;white-space:pre">Command:</div>
<div class="a" style="left:628px;top:958px;width:60px;height:15px;background:rgba(100,102,106,0.9);border-radius:3px"></div>
<div class="a mono" style="left:630px;top:959px;font-size:11.7px;line-height:15px;color:#ececec;white-space:pre">Command:</div>
<div class="a" style="left:566px;top:976px;width:57px;height:26px;background:linear-gradient(#5c5c5c,#3a3a3a 70%,#2e2e2e);border-radius:3px 0 0 3px"></div>
<div class="a" style="left:622px;top:977px;width:731px;height:25px;background:#c3c3c3"></div>
<svg style="left:566px;top:976px" width="790" height="26">
 <path d="M5 5 V21 M8 5 V21" stroke="#9a9a9a" stroke-width="1.5" stroke-dasharray="1.5 1.5"/>
 <path d="M15.5 9 L23 17 M23 9 L15.5 17" stroke="#eee" stroke-width="1.6"/>
 <path d="M33 20 L40 13 C38 10 40 6 44 6 L42 9 L44 11 L47 9 C47 13 44 15 41 14 L34 21 Z" fill="#ddd"/>
 <rect x="61.5" y="7.5" width="16" height="12" fill="#c8c8c8" stroke="#444"/><rect x="61.5" y="7.5" width="16" height="2" fill="#444"/><path d="M64 12 L67 14 L64 16 M68 17 H72" fill="none" stroke="#444" stroke-width="1"/>
 <path d="M80 11 H86 L83 14 Z" fill="#666"/>
 <path d="M776 14 H784 L780 10 Z" fill="#333"/>
</svg>
<div class="a mono" style="left:658px;top:983px;font-size:11.8px;font-style:italic;color:#888;white-space:pre">Type a command</div>

<div class="a" style="left:0;top:1003px;width:1919px;height:29px;background:#3c3c3c"></div>
<div class="a" style="left:0;top:1003px;width:1919px;height:1px;background:#595959"></div>
<svg style="left:0;top:1003px" width="170" height="29">
 <path d="M9,0.5 L72,0.5 C68,3 67,6 67,12 C66,16 65,18 61,18 L20,18 C16,18 15,16 14,12 C13,6 12,3 9,0.5 Z" fill="#7a7a7a"/>
 <path d="M71,0.5 L137,0.5 C133,3 132,6 131,12 C130,16 129,18 125,18 L79,18 C75,18 74,16 74,12 C73,6 72,3 71,0.5 Z" fill="#5f5f5f"/>
 <path d="M141,2 L161,2 C158,6 157,12 155,15 C154,17 152,18 148,18 L139,18 C139,12 140,6 141,2 Z" fill="#555"/>
 <path d="M150,6 V13 M146.5,9.5 H153.5" stroke="#d8d8d8" stroke-width="1.6"/>
</svg>
<div class="t" style="left:23px;top:1004px;font-weight:bold;color:#fff;font-size:12px">Model</div>
<div class="t" style="left:81px;top:1004px;color:#e2e2e2;font-size:12px">Layout1</div>
<div class="a" style="left:1355px;top:1003px;width:564px;height:29px;background:#464646"></div>
<div class="sb" style="left:1357px;width:49px"></div>
<div class="t" style="left:1361px;top:1010px;color:#f4f4f4;font-size:12px;letter-spacing:-0.3px">MODEL</div>
<div class="sb" style="left:1407px;width:66px"></div>
<div class="sb" style="left:1474px;width:167px"></div>
<div class="sb" style="left:1642px;width:107px"></div>
<div class="sb" style="left:1750px;width:41px"></div>
<div class="sb" style="left:1792px;width:25px"></div>
<div class="sb" style="left:1818px;width:24px"></div>
<div class="sb" style="left:1843px;width:26px"></div>
<div class="sb" style="left:1870px;width:49px"></div>
<svg style="left:1355px;top:1003px" width="564" height="29">
 <g stroke="#f0f0f0" stroke-width="1.2" fill="none">
  <path d="M59 7 V22 M64 7 V22 M69 7 V22 M57 10 H72 M57 15 H72 M57 20 H72"/>
 </g>
 <g fill="#f0f0f0"><circle cx="84" cy="9" r="1.2"/><circle cx="90" cy="9" r="1.2"/><circle cx="96" cy="9" r="1.2"/><circle cx="84" cy="14.5" r="1.2"/><circle cx="90" cy="14.5" r="1.2"/><circle cx="96" cy="14.5" r="1.2"/><circle cx="84" cy="20" r="1.2"/><circle cx="90" cy="20" r="1.2"/><circle cx="96" cy="20" r="1.2"/></g>
 <path d="M104 12 H111 L107.5 16 Z M171 12 H178 L174.5 16 Z M210 12 H217 L213.5 16 Z M275 12 H282 L278.5 16 Z M382 12 H389 L385.5 16 Z M424 12 H431 L427.5 16 Z" fill="#f0f0f0"/>
 <path d="M123 7 V22 H139 M123 17 H127 V22" fill="none" stroke="#eee" stroke-width="1.2"/>
 <rect x="144" y="5" width="22" height="21" fill="#5a8ac4"/>
 <circle cx="154" cy="17" r="6" fill="none" stroke="#f4f4f4" stroke-width="1.3"/><path d="M152 17 H163 M154 17 L162 9" stroke="#f4f4f4" stroke-width="1.3"/>
 <path d="M187 6 L199 22" stroke="#e05050" stroke-width="1.2"/><path d="M193 5 V24" stroke="#40c8c8" stroke-width="1.3"/><rect x="191.5" y="12.5" width="3" height="3" fill="#eee"/>
 <rect x="223" y="5" width="22" height="21" fill="#5a8ac4"/><path d="M226 22 H243 M228 20 L242 8" stroke="#f4f4f4" stroke-width="1.4"/><rect x="232.5" y="14" width="3" height="3" fill="#fff"/>
 <rect x="247" y="5" width="22" height="21" fill="#5a8ac4"/><rect x="252" y="9" width="13" height="13" fill="none" stroke="#f4f4f4" stroke-width="1.3"/><rect x="249" y="6.5" width="5" height="5" fill="#5a8ac4" stroke="#f4f4f4"/>
 <rect x="289" y="5" width="22" height="21" fill="#5a8ac4"/>
 <path d="M299 7 L295 15 L297 15 L293 23 L299 20 L305 23 L301 15 L303 15 Z" fill="#f4f4f4"/><circle cx="305" cy="11" r="2.6" fill="none" stroke="#f4f4f4" stroke-width="1.1"/>
 <path d="M322 8 L318 15 L320 15 L316 23 L322 20 L328 23 L324 15 L326 15 Z" fill="#c8c8c8"/><path d="M329 5 L326 10 L329 10 L326 14" fill="none" stroke="#ddd" stroke-width="1.1"/>
 <path d="M347 8 L343 15 L345 15 L341 23 L347 20 L353 23 L349 15 L351 15 Z" fill="#c8c8c8"/>
 <text x="365" y="20" font-family="Liberation Sans" font-size="12" fill="#f0f0f0">1:1</text>
 <circle cx="407.5" cy="14.5" r="5" fill="none" stroke="#d0d0d0" stroke-width="3.2" stroke-dasharray="2.3 1.6"/><circle cx="407.5" cy="14.5" r="4" fill="#d0d0d0"/><circle cx="407.5" cy="14.5" r="2" fill="#464646"/>
 <path d="M448 6 V23 M439.5 14.5 H456.5" stroke="#f0f0f0" stroke-width="1.8"/>
 <rect x="468.5" y="5.5" width="7" height="7" fill="none" stroke="#ddd"/><circle cx="480" cy="12" r="3.5" fill="none" stroke="#ddd"/><path d="M473 17 L477 23 H469 Z" fill="none" stroke="#ddd"/>
 <rect x="494" y="6" width="13" height="16" fill="#dceaf4"/><path d="M495 9 H506 M495 13 H506 M495 17 H506" stroke="#4a9ad8" stroke-width="1.5" stroke-dasharray="2 1"/><rect x="494" y="18" width="7" height="4" fill="#f0e040"/><path d="M501 20 L504 23 L509 16" stroke="#22bb22" stroke-width="1.8" fill="none"/>
 <rect x="519.5" y="7.5" width="15" height="13" fill="none" stroke="#eee" stroke-width="1.2"/><path d="M522 18 L526 14 M522 18 V15 M522 18 H525 M532 10 L528 14 M532 10 V13 M532 10 H529" stroke="#eee" stroke-width="1"/>
 <path d="M543 8 H559 M543 14 H559 M543 20 H559" stroke="#f0f0f0" stroke-width="2"/>
</svg>

</body></html>
